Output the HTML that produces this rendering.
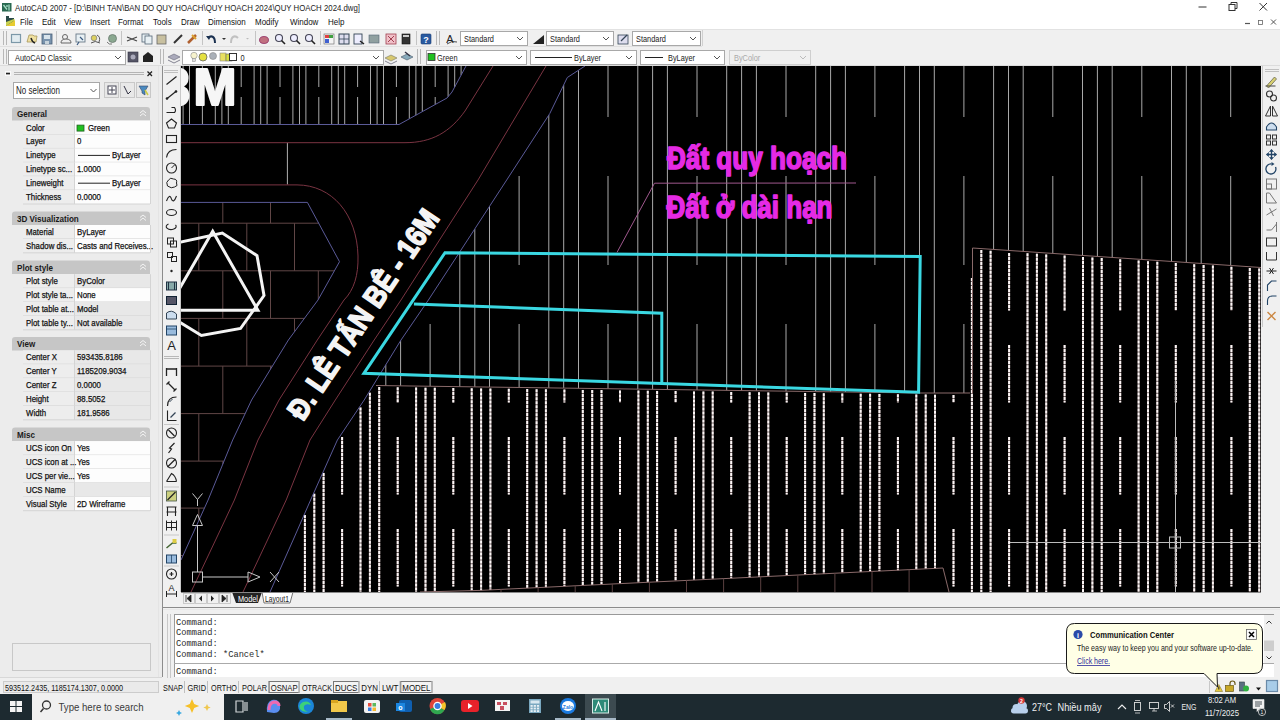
<!DOCTYPE html>
<html><head><meta charset="utf-8"><title>AutoCAD 2007</title>
<style>html,body{margin:0;padding:0;width:1280px;height:720px;overflow:hidden;background:#f0f0f0;}svg{display:block;}</style>
</head><body>
<svg width="1280" height="720" viewBox="0 0 1280 720" font-family="Liberation Sans">
<rect x="0" y="0" width="1280" height="720" fill="#f0f0f0"/>
<rect x="0" y="0" width="1280" height="29" fill="#ffffff"/>
<rect x="2" y="3" width="9.5" height="8.5" fill="#2a6a52"/>
<path d="M3.5,5 L7,9.5 M7,5 v2 M9,4.5 v6" fill="none" stroke="#a8e0c8" stroke-width="1.3"/>
<text x="15" y="10.8" font-family="Liberation Sans" font-size="9.2" fill="#222" textLength="345" lengthAdjust="spacingAndGlyphs">AutoCAD 2007 - [D:\BINH TAN\BAN DO QUY HOACH\QUY HOACH 2024\QUY HOACH 2024.dwg]</text>
<line x1="1198.5" y1="7" x2="1206.5" y2="7" stroke="#333" stroke-width="1"/>
<rect x="1229" y="4.5" width="6" height="6" fill="none" stroke="#333" stroke-width="1"/>
<path d="M1231,4.5 V2.5 H1237 V8.5 H1235" fill="none" stroke="#333" stroke-width="1"/>
<path d="M1259.5,3 L1267,10.5 M1267,3 L1259.5,10.5" fill="none" stroke="#333" stroke-width="1"/>
<path d="M6,16 h3 v2 h5 v4 L6,26z" fill="#2a4a48" stroke="none" stroke-width="1"/>
<path d="M6,26 L15,20 V26z" fill="#e8cc30" stroke="none" stroke-width="1"/>
<path d="M6,22 L14,19 L15,20 L6,26z" fill="#c8d050" stroke="none" stroke-width="1"/>
<text x="20" y="24.5" font-family="Liberation Sans" font-size="9.5" fill="#111" textLength="12.8585625" lengthAdjust="spacingAndGlyphs">File</text>
<text x="42" y="24.5" font-family="Liberation Sans" font-size="9.5" fill="#111" textLength="13.749749999999999" lengthAdjust="spacingAndGlyphs">Edit</text>
<text x="64" y="24.5" font-family="Liberation Sans" font-size="9.5" fill="#111" textLength="17.15175" lengthAdjust="spacingAndGlyphs">View</text>
<text x="90" y="24.5" font-family="Liberation Sans" font-size="9.5" fill="#111" textLength="19.9565625" lengthAdjust="spacingAndGlyphs">Insert</text>
<text x="118" y="24.5" font-family="Liberation Sans" font-size="9.5" fill="#111" textLength="25.272187499999998" lengthAdjust="spacingAndGlyphs">Format</text>
<text x="153" y="24.5" font-family="Liberation Sans" font-size="9.5" fill="#111" textLength="18.6283125" lengthAdjust="spacingAndGlyphs">Tools</text>
<text x="181" y="24.5" font-family="Liberation Sans" font-size="9.5" fill="#111" textLength="18.62175" lengthAdjust="spacingAndGlyphs">Draw</text>
<text x="208" y="24.5" font-family="Liberation Sans" font-size="9.5" fill="#111" textLength="37.697624999999995" lengthAdjust="spacingAndGlyphs">Dimension</text>
<text x="255" y="24.5" font-family="Liberation Sans" font-size="9.5" fill="#111" textLength="23.502937499999998" lengthAdjust="spacingAndGlyphs">Modify</text>
<text x="290" y="24.5" font-family="Liberation Sans" font-size="9.5" fill="#111" textLength="28.3815" lengthAdjust="spacingAndGlyphs">Window</text>
<text x="328" y="24.5" font-family="Liberation Sans" font-size="9.5" fill="#111" textLength="16.4115" lengthAdjust="spacingAndGlyphs">Help</text>
<line x1="1245" y1="23.5" x2="1250" y2="23.5" stroke="#555" stroke-width="1.2"/>
<rect x="1258.5" y="20.5" width="4" height="4" fill="none" stroke="#666" stroke-width="0.8"/>
<path d="M1271,19.5 L1276,24.5 M1276,19.5 L1271,24.5" fill="none" stroke="#555" stroke-width="1"/>
<line x1="0" y1="29.5" x2="1280" y2="29.5" stroke="#e2e2e2" stroke-width="1"/>
<line x1="0" y1="46.5" x2="702" y2="46.5" stroke="#e0e0e0" stroke-width="1"/>
<line x1="0" y1="65.5" x2="1280" y2="65.5" stroke="#dcdcdc" stroke-width="1"/>
<line x1="3.5" y1="31" x2="3.5" y2="45" stroke="#b8b8b8" stroke-width="1"/>
<line x1="6.5" y1="31" x2="6.5" y2="45" stroke="#b8b8b8" stroke-width="1"/>
<line x1="3.5" y1="49" x2="3.5" y2="64" stroke="#b8b8b8" stroke-width="1"/>
<line x1="6.5" y1="49" x2="6.5" y2="64" stroke="#b8b8b8" stroke-width="1"/>
<rect x="11.5" y="34.5" width="9" height="8" fill="#e2ecf0" stroke="#7c98a8" stroke-width="1.2"/>
<path d="M27,42 l2,-7 h4 l1,1 h3 l-1,6z" fill="#efe0a0" stroke="#a8985a" stroke-width="0.8"/>
<path d="M31,38 q1,4 4,5" fill="none" stroke="#222" stroke-width="1.4"/>
<rect x="42" y="34" width="10" height="10" fill="#7a94ae" stroke="#4a6078" stroke-width="0.8"/>
<rect x="44" y="35" width="6" height="4" fill="#d8e4ec"/>
<rect x="45" y="41" width="4" height="3" fill="#c8d4dc"/>
<circle cx="65" cy="37" r="2.5" fill="none" stroke="#666" stroke-width="1"/>
<path d="M61,43 q0,-4 5,-4 q5,0 5,4z" fill="#eee" stroke="#666" stroke-width="1"/>
<rect x="76" y="34" width="9" height="8" fill="#e8f0f4" stroke="#6a7a88" stroke-width="0.9"/>
<path d="M79,42 l-2,3 M80,37 l3,3" fill="none" stroke="#3a5a80" stroke-width="1.2"/>
<circle cx="94" cy="38" r="2.8" fill="#dcd060" stroke="#777" stroke-width="0.7"/>
<path d="M97,35 q4,2 2,7 M91,43 q4,-3 9,0" fill="none" stroke="#555" stroke-width="1"/>
<circle cx="112.5" cy="38.5" r="4" fill="#8aa890" stroke="#6a7a70" stroke-width="0.8"/>
<path d="M107,42 q2,3 5,2" fill="none" stroke="#777" stroke-width="1"/>
<path d="M127,37 L137,41 M127,41 L137,37" fill="none" stroke="#444" stroke-width="1.2"/>
<rect x="142" y="34" width="7" height="8" fill="#e8f0f4" stroke="#567" stroke-width="0.8"/>
<rect x="145" y="36" width="7" height="8" fill="#e8f0f4" stroke="#567" stroke-width="0.8"/>
<rect x="157" y="35" width="9" height="9" fill="#c8c0a0" stroke="#666" stroke-width="0.8"/>
<path d="M174,43 L182,35" fill="none" stroke="#333" stroke-width="2"/>
<path d="M188,43 L196,35" fill="none" stroke="#b06030" stroke-width="2.5"/>
<path d="M192,35 l4,4" fill="none" stroke="#dca030" stroke-width="2"/>
<path d="M215,43 C215,36 211,35 208,38" fill="none" stroke="#1a3050" stroke-width="2"/>
<path d="M206,36 l3,4 l2,-4z" fill="#1a3050" stroke="none" stroke-width="1"/>
<path d="M231,43 C231,36 235,35 238,38" fill="none" stroke="#c0c0c0" stroke-width="2"/>
<ellipse cx="264" cy="40" rx="4.5" ry="3.5" fill="#c07080" stroke="#704" stroke-width="0.6"/>
<circle cx="279" cy="38" r="3.5" fill="#eef" stroke="#445" stroke-width="1.1"/>
<path d="M281.5,40.5 l3.5,3.5" fill="none" stroke="#222" stroke-width="1.6"/>
<circle cx="294" cy="38" r="3.5" fill="#eef" stroke="#445" stroke-width="1.1"/>
<path d="M296.5,40.5 l3.5,3.5" fill="none" stroke="#222" stroke-width="1.6"/>
<circle cx="309" cy="38" r="3.5" fill="#eef" stroke="#445" stroke-width="1.1"/>
<path d="M311.5,40.5 l3.5,3.5" fill="none" stroke="#222" stroke-width="1.6"/>
<rect x="324" y="34" width="10" height="10" fill="#f4f4f4" stroke="#666" stroke-width="0.6"/>
<rect x="325" y="35" width="4" height="3" fill="#e04040"/>
<rect x="329" y="35" width="4" height="3" fill="#40a040"/>
<rect x="325" y="39" width="4" height="4" fill="#4060d0"/>
<rect x="339" y="34" width="10" height="10" fill="#dde" stroke="#345" stroke-width="1"/>
<line x1="344" y1="34" x2="344" y2="44" stroke="#345" stroke-width="0.8"/>
<line x1="339" y1="39" x2="349" y2="39" stroke="#345" stroke-width="0.8"/>
<rect x="354" y="34" width="8" height="10" fill="#eef" stroke="#345" stroke-width="0.9"/>
<path d="M360,41 l4,3" fill="none" stroke="#222" stroke-width="1.5"/>
<rect x="369" y="35" width="10" height="8" fill="#90a0a0" stroke="#567" stroke-width="0.6"/>
<rect x="386" y="34" width="10" height="10" fill="#f0c0c8" stroke="#a04050" stroke-width="0.8"/>
<path d="M388,36 l6,6 M394,36 l-6,6" fill="none" stroke="#a04050" stroke-width="1"/>
<rect x="402" y="34" width="8" height="10" fill="#333" stroke="#111" stroke-width="0.6"/>
<rect x="403" y="35" width="6" height="2" fill="#ccc"/>
<rect x="421" y="34" width="10" height="10" fill="#2a5aa0" stroke="#1a3a70" stroke-width="0.6" rx="1"/>
<text x="426" y="42.5" font-family="Liberation Sans" font-size="9" fill="#fff" font-weight="bold" text-anchor="middle">?</text>
<line x1="56.5" y1="31" x2="56.5" y2="45" stroke="#c4c4c4" stroke-width="1"/>
<line x1="121.5" y1="31" x2="121.5" y2="45" stroke="#c4c4c4" stroke-width="1"/>
<line x1="202.5" y1="31" x2="202.5" y2="45" stroke="#c4c4c4" stroke-width="1"/>
<line x1="255.5" y1="31" x2="255.5" y2="45" stroke="#c4c4c4" stroke-width="1"/>
<line x1="320.5" y1="31" x2="320.5" y2="45" stroke="#c4c4c4" stroke-width="1"/>
<line x1="416.5" y1="31" x2="416.5" y2="45" stroke="#c4c4c4" stroke-width="1"/>
<path d="M222,38 l4,0 l-2,2z" fill="#333" stroke="none" stroke-width="1"/>
<path d="M246,38 l3,0 l-1.5,1.5z" fill="#bbb" stroke="none" stroke-width="1"/>
<line x1="436.5" y1="31" x2="436.5" y2="45" stroke="#b8b8b8" stroke-width="1"/>
<line x1="439.5" y1="31" x2="439.5" y2="45" stroke="#b8b8b8" stroke-width="1"/>
<text x="450" y="43" font-family="Liberation Sans" font-size="11" fill="#222" text-anchor="middle">A</text>
<path d="M447,44 q5,-4 10,-2" fill="none" stroke="#222" stroke-width="0.8"/>
<rect x="460.5" y="31.5" width="67" height="14" fill="#ffffff" stroke="#a8a8a8" stroke-width="1"/>
<text x="464" y="41.5" font-family="Liberation Sans" font-size="9" fill="#222" textLength="29.949218749999996" lengthAdjust="spacingAndGlyphs">Standard</text>
<path d="M517,37.0 l3,3 l3,-3" fill="none" stroke="#555" stroke-width="1"/>
<path d="M533,44 L544,35 L544,44z" fill="#222" stroke="none" stroke-width="1"/>
<rect x="546.5" y="31.5" width="67" height="14" fill="#ffffff" stroke="#a8a8a8" stroke-width="1"/>
<text x="550" y="41.5" font-family="Liberation Sans" font-size="9" fill="#222" textLength="29.949218749999996" lengthAdjust="spacingAndGlyphs">Standard</text>
<path d="M603,37.0 l3,3 l3,-3" fill="none" stroke="#555" stroke-width="1"/>
<rect x="618" y="35" width="10" height="9" fill="#dde" stroke="#345" stroke-width="0.8"/>
<path d="M621,41 l6,-6" fill="none" stroke="#345" stroke-width="1.2"/>
<rect x="632.5" y="31.5" width="68" height="14" fill="#ffffff" stroke="#a8a8a8" stroke-width="1"/>
<text x="636" y="41.5" font-family="Liberation Sans" font-size="9" fill="#222" textLength="29.949218749999996" lengthAdjust="spacingAndGlyphs">Standard</text>
<path d="M690,37.0 l3,3 l3,-3" fill="none" stroke="#555" stroke-width="1"/>
<line x1="702.5" y1="30" x2="702.5" y2="46" stroke="#d0d0d0" stroke-width="1"/>
<rect x="8.5" y="50.5" width="117" height="14" fill="#ffffff" stroke="#a8a8a8" stroke-width="1"/>
<text x="15" y="60.5" font-family="Liberation Sans" font-size="9" fill="#222" textLength="56.59665625" lengthAdjust="spacingAndGlyphs">AutoCAD Classic</text>
<path d="M115,56.0 l3,3 l3,-3" fill="none" stroke="#555" stroke-width="1"/>
<rect x="128" y="52" width="10" height="10" fill="#556" stroke="#334" stroke-width="0.6"/>
<circle cx="133" cy="57" r="2.5" fill="#aab"/>
<path d="M143,62 V56 L148,52 L153,56 V62z" fill="#222" stroke="none" stroke-width="1"/>
<line x1="160.5" y1="49" x2="160.5" y2="64" stroke="#b8b8b8" stroke-width="1"/>
<line x1="163.5" y1="49" x2="163.5" y2="64" stroke="#b8b8b8" stroke-width="1"/>
<path d="M168,57 l6,-3 l6,3 l-6,3z" fill="#aab" stroke="#667" stroke-width="0.6"/>
<path d="M168,60 l6,3 l6,-3" fill="none" stroke="#667" stroke-width="0.8"/>
<rect x="182.5" y="50.5" width="201" height="14" fill="#ffffff" stroke="#a8a8a8" stroke-width="1"/>
<text x="240.5" y="60.5" font-family="Liberation Sans" font-size="9" fill="#222" textLength="4.10384375" lengthAdjust="spacingAndGlyphs">0</text>
<path d="M373,56.0 l3,3 l3,-3" fill="none" stroke="#555" stroke-width="1"/>
<circle cx="194" cy="55.5" r="3.2" fill="#f6f2cc" stroke="#999" stroke-width="0.7"/>
<rect x="192.5" y="58.5" width="3" height="3" fill="#ddd" stroke="#888" stroke-width="0.5"/>
<circle cx="203" cy="57" r="4" fill="#e4e040" stroke="#666" stroke-width="0.8"/>
<circle cx="213" cy="56" r="3.5" fill="#aab0b8" stroke="#888" stroke-width="0.6"/>
<rect x="220" y="53" width="6" height="8" fill="#e8e060" stroke="#888" stroke-width="0.6"/>
<rect x="226" y="54" width="6" height="7" fill="#d8e040" stroke="#666" stroke-width="0.6"/>
<rect x="229.5" y="53.5" width="7" height="7" fill="#fff" stroke="#333" stroke-width="1"/>
<path d="M385,58 l6,-3 l6,3 l-6,3z" fill="#d8c870" stroke="#776" stroke-width="0.6"/>
<path d="M385,61 l6,3 l6,-3" fill="none" stroke="#667" stroke-width="0.8"/>
<path d="M401,57 l6,-3 l6,3 l-6,3z" fill="#8ab" stroke="#456" stroke-width="0.6"/>
<path d="M405,52 l5,4" fill="none" stroke="#334" stroke-width="1.5"/>
<line x1="417.5" y1="49" x2="417.5" y2="64" stroke="#b8b8b8" stroke-width="1"/>
<line x1="420.5" y1="49" x2="420.5" y2="64" stroke="#b8b8b8" stroke-width="1"/>
<rect x="426.5" y="50.5" width="100" height="14" fill="#ffffff" stroke="#a8a8a8" stroke-width="1"/>
<rect x="428" y="53.5" width="7" height="7" fill="#20c020" stroke="#333" stroke-width="0.8"/>
<text x="437" y="60.5" font-family="Liberation Sans" font-size="9" fill="#222" textLength="20.50896875" lengthAdjust="spacingAndGlyphs">Green</text>
<path d="M516,56.0 l3,3 l3,-3" fill="none" stroke="#555" stroke-width="1"/>
<rect x="530.5" y="50.5" width="106" height="14" fill="#ffffff" stroke="#a8a8a8" stroke-width="1"/>
<line x1="535" y1="57.5" x2="572" y2="57.5" stroke="#222" stroke-width="1"/>
<text x="574" y="60.5" font-family="Liberation Sans" font-size="9" fill="#222" textLength="27.07153125" lengthAdjust="spacingAndGlyphs">ByLayer</text>
<path d="M626,56.0 l3,3 l3,-3" fill="none" stroke="#555" stroke-width="1"/>
<rect x="640.5" y="50.5" width="84" height="14" fill="#ffffff" stroke="#a8a8a8" stroke-width="1"/>
<line x1="645" y1="57.5" x2="663" y2="57.5" stroke="#222" stroke-width="1"/>
<text x="668" y="60.5" font-family="Liberation Sans" font-size="9" fill="#222" textLength="27.07153125" lengthAdjust="spacingAndGlyphs">ByLayer</text>
<path d="M714,56.0 l3,3 l3,-3" fill="none" stroke="#555" stroke-width="1"/>
<rect x="729.5" y="50.5" width="81" height="14" fill="#f0f0f0" stroke="#cfcfcf" stroke-width="1"/>
<text x="734" y="60.5" font-family="Liberation Sans" font-size="9" fill="#aaa" textLength="26.247687499999998" lengthAdjust="spacingAndGlyphs">ByColor</text>
<path d="M800,56.0 l3,3 l3,-3" fill="none" stroke="#bbb" stroke-width="1"/>
<rect x="0" y="66" width="162" height="611" fill="#ececec"/>
<line x1="158.5" y1="66" x2="158.5" y2="677" stroke="#e4e4e4" stroke-width="1"/>
<rect x="5" y="71" width="6" height="5" fill="#fafafa"/>
<rect x="6" y="72.7" width="4" height="1.7" fill="#222"/>
<line x1="14" y1="72.5" x2="144" y2="72.5" stroke="#b4b4b4" stroke-width="1"/>
<line x1="14" y1="74.5" x2="144" y2="74.5" stroke="#b4b4b4" stroke-width="1"/>
<path d="M147.5,71.5 l4.5,4.5 M152,71.5 l-4.5,4.5" fill="none" stroke="#222" stroke-width="1.3"/>
<rect x="13.5" y="82.5" width="86" height="16" fill="#fff" stroke="#a8a8a8" stroke-width="1"/>
<text x="16" y="93.5" font-family="Liberation Sans" font-size="10" fill="#222" textLength="44" lengthAdjust="spacingAndGlyphs">No selection</text>
<path d="M90.5,89 l3,3 l3,-3" fill="none" stroke="#555" stroke-width="1"/>
<rect x="104.5" y="82.5" width="14" height="15" fill="#e8e8e8" stroke="#c8c8c8" stroke-width="1"/>
<rect x="120.5" y="82.5" width="14" height="15" fill="#e8e8e8" stroke="#c8c8c8" stroke-width="1"/>
<rect x="136.5" y="82.5" width="14" height="15" fill="#e8e8e8" stroke="#c8c8c8" stroke-width="1"/>
<rect x="108" y="86" width="8" height="8" fill="#fff" stroke="#445" stroke-width="1"/>
<path d="M112,87 v6 M109,90 h6" fill="none" stroke="#445" stroke-width="1"/>
<path d="M124,86 l4,8 l3,-3" fill="none" stroke="#334" stroke-width="1"/>
<path d="M139,86 h9 l-3,5 v4 l-3,-2 v-2z" fill="#4a8ac0" stroke="#346" stroke-width="0.6"/>
<path d="M145,90 l3,5" fill="none" stroke="#cc4" stroke-width="1.5"/>
<path d="M12,120.5 V110 Q12,107 15,107 H147 Q150,107 150,110 V120.5Z" fill="#c6c6c6" stroke="none" stroke-width="1"/>
<text x="17" y="117" font-family="Liberation Sans" font-size="9.5" fill="#1a1a1a" font-weight="bold" textLength="30.070078125" lengthAdjust="spacingAndGlyphs">General</text>
<path d="M140,113 l3,-2.5 l3,2.5 M140,116 l3,-2.5 l3,2.5" fill="none" stroke="#f4f4f4" stroke-width="1"/>
<rect x="23" y="120.6" width="51.5" height="13.9" fill="#ededed"/>
<rect x="74.5" y="120.6" width="75.5" height="13.9" fill="#fdfdfd"/>
<line x1="23" y1="134.5" x2="150" y2="134.5" stroke="#d4d4d4" stroke-width="1"/>
<line x1="74.5" y1="120.6" x2="74.5" y2="134.5" stroke="#d4d4d4" stroke-width="1"/>
<text x="26" y="130.5" font-family="Liberation Sans" font-size="9" fill="#111" stroke="#111" stroke-width="0.25" textLength="18.7104375" lengthAdjust="spacingAndGlyphs">Color</text>
<rect x="77" y="125.1" width="7" height="6" fill="#20c020" stroke="#206020" stroke-width="0.8"/>
<text x="88" y="130.5" font-family="Liberation Sans" font-size="9" fill="#111" stroke="#111" stroke-width="0.25" textLength="21.759515625" lengthAdjust="spacingAndGlyphs">Green</text>
<rect x="23" y="134.5" width="51.5" height="13.9" fill="#ededed"/>
<rect x="74.5" y="134.5" width="75.5" height="13.9" fill="#fdfdfd"/>
<line x1="23" y1="148.4" x2="150" y2="148.4" stroke="#d4d4d4" stroke-width="1"/>
<line x1="74.5" y1="134.5" x2="74.5" y2="148.4" stroke="#d4d4d4" stroke-width="1"/>
<text x="26" y="144.4" font-family="Liberation Sans" font-size="9" fill="#111" stroke="#111" stroke-width="0.25" textLength="19.584515625" lengthAdjust="spacingAndGlyphs">Layer</text>
<text x="77" y="144.4" font-family="Liberation Sans" font-size="9" fill="#111" stroke="#111" stroke-width="0.25" textLength="4.354078125" lengthAdjust="spacingAndGlyphs">0</text>
<rect x="23" y="148.4" width="51.5" height="13.9" fill="#ededed"/>
<rect x="74.5" y="148.4" width="75.5" height="13.9" fill="#fdfdfd"/>
<line x1="23" y1="162.3" x2="150" y2="162.3" stroke="#d4d4d4" stroke-width="1"/>
<line x1="74.5" y1="148.4" x2="74.5" y2="162.3" stroke="#d4d4d4" stroke-width="1"/>
<text x="26" y="158.3" font-family="Liberation Sans" font-size="9" fill="#111" stroke="#111" stroke-width="0.25" textLength="29.600390625" lengthAdjust="spacingAndGlyphs">Linetype</text>
<line x1="78" y1="155.4" x2="110" y2="155.4" stroke="#222" stroke-width="1"/>
<text x="112" y="158.3" font-family="Liberation Sans" font-size="9" fill="#111" stroke="#111" stroke-width="0.25" textLength="28.722234375" lengthAdjust="spacingAndGlyphs">ByLayer</text>
<rect x="23" y="162.3" width="51.5" height="13.9" fill="#ededed"/>
<rect x="74.5" y="162.3" width="75.5" height="13.9" fill="#fdfdfd"/>
<line x1="23" y1="176.20000000000002" x2="150" y2="176.20000000000002" stroke="#d4d4d4" stroke-width="1"/>
<line x1="74.5" y1="162.3" x2="74.5" y2="176.20000000000002" stroke="#d4d4d4" stroke-width="1"/>
<text x="26" y="172.20000000000002" font-family="Liberation Sans" font-size="9" fill="#111" stroke="#111" stroke-width="0.25" textLength="46.130390625" lengthAdjust="spacingAndGlyphs">Linetype sc...</text>
<text x="77" y="172.20000000000002" font-family="Liberation Sans" font-size="9" fill="#111" stroke="#111" stroke-width="0.25" textLength="23.945390624999998" lengthAdjust="spacingAndGlyphs">1.0000</text>
<rect x="23" y="176.20000000000002" width="51.5" height="13.9" fill="#ededed"/>
<rect x="74.5" y="176.20000000000002" width="75.5" height="13.9" fill="#fdfdfd"/>
<line x1="23" y1="190.10000000000002" x2="150" y2="190.10000000000002" stroke="#d4d4d4" stroke-width="1"/>
<line x1="74.5" y1="176.20000000000002" x2="74.5" y2="190.10000000000002" stroke="#d4d4d4" stroke-width="1"/>
<text x="26" y="186.10000000000002" font-family="Liberation Sans" font-size="9" fill="#111" stroke="#111" stroke-width="0.25" textLength="37.43446875" lengthAdjust="spacingAndGlyphs">Lineweight</text>
<line x1="78" y1="183.20000000000002" x2="110" y2="183.20000000000002" stroke="#222" stroke-width="1"/>
<text x="112" y="186.10000000000002" font-family="Liberation Sans" font-size="9" fill="#111" stroke="#111" stroke-width="0.25" textLength="28.722234375" lengthAdjust="spacingAndGlyphs">ByLayer</text>
<rect x="23" y="190.10000000000002" width="51.5" height="13.9" fill="#ededed"/>
<rect x="74.5" y="190.10000000000002" width="75.5" height="13.9" fill="#fdfdfd"/>
<line x1="23" y1="204.00000000000003" x2="150" y2="204.00000000000003" stroke="#d4d4d4" stroke-width="1"/>
<line x1="74.5" y1="190.10000000000002" x2="74.5" y2="204.00000000000003" stroke="#d4d4d4" stroke-width="1"/>
<text x="26" y="200.00000000000003" font-family="Liberation Sans" font-size="9" fill="#111" stroke="#111" stroke-width="0.25" textLength="35.244515625" lengthAdjust="spacingAndGlyphs">Thickness</text>
<text x="77" y="200.00000000000003" font-family="Liberation Sans" font-size="9" fill="#111" stroke="#111" stroke-width="0.25" textLength="23.945390624999998" lengthAdjust="spacingAndGlyphs">0.0000</text>
<line x1="150.5" y1="120.6" x2="150.5" y2="204.00000000000003" stroke="#d4d4d4" stroke-width="1"/>
<path d="M12,225.0 V214.5 Q12,211.5 15,211.5 H147 Q150,211.5 150,214.5 V225.0Z" fill="#c6c6c6" stroke="none" stroke-width="1"/>
<text x="17" y="221.5" font-family="Liberation Sans" font-size="9.5" fill="#1a1a1a" font-weight="bold" textLength="61.77374999999999" lengthAdjust="spacingAndGlyphs">3D Visualization</text>
<path d="M140,217.5 l3,-2.5 l3,2.5 M140,220.5 l3,-2.5 l3,2.5" fill="none" stroke="#f4f4f4" stroke-width="1"/>
<rect x="23" y="225" width="51.5" height="13.9" fill="#ededed"/>
<rect x="74.5" y="225" width="75.5" height="13.9" fill="#fdfdfd"/>
<line x1="23" y1="238.9" x2="150" y2="238.9" stroke="#d4d4d4" stroke-width="1"/>
<line x1="74.5" y1="225" x2="74.5" y2="238.9" stroke="#d4d4d4" stroke-width="1"/>
<text x="26" y="234.9" font-family="Liberation Sans" font-size="9" fill="#111" stroke="#111" stroke-width="0.25" textLength="27.846796875" lengthAdjust="spacingAndGlyphs">Material</text>
<text x="77" y="234.9" font-family="Liberation Sans" font-size="9" fill="#111" stroke="#111" stroke-width="0.25" textLength="28.722234375" lengthAdjust="spacingAndGlyphs">ByLayer</text>
<rect x="23" y="238.9" width="51.5" height="13.9" fill="#ededed"/>
<rect x="74.5" y="238.9" width="75.5" height="13.9" fill="#fdfdfd"/>
<line x1="23" y1="252.8" x2="150" y2="252.8" stroke="#d4d4d4" stroke-width="1"/>
<line x1="74.5" y1="238.9" x2="74.5" y2="252.8" stroke="#d4d4d4" stroke-width="1"/>
<text x="26" y="248.8" font-family="Liberation Sans" font-size="9" fill="#111" stroke="#111" stroke-width="0.25" textLength="47.003109374999994" lengthAdjust="spacingAndGlyphs">Shadow dis...</text>
<text x="77" y="248.8" font-family="Liberation Sans" font-size="9" fill="#111" stroke="#111" stroke-width="0.25" textLength="76.153546875" lengthAdjust="spacingAndGlyphs">Casts and Receives...</text>
<line x1="150.5" y1="225" x2="150.5" y2="252.8" stroke="#d4d4d4" stroke-width="1"/>
<path d="M12,274.0 V263.5 Q12,260.5 15,260.5 H147 Q150,260.5 150,263.5 V274.0Z" fill="#c6c6c6" stroke="none" stroke-width="1"/>
<text x="17" y="270.5" font-family="Liberation Sans" font-size="9.5" fill="#1a1a1a" font-weight="bold" textLength="35.897890625" lengthAdjust="spacingAndGlyphs">Plot style</text>
<path d="M140,266.5 l3,-2.5 l3,2.5 M140,269.5 l3,-2.5 l3,2.5" fill="none" stroke="#f4f4f4" stroke-width="1"/>
<rect x="23" y="274.2" width="51.5" height="13.9" fill="#ededed"/>
<rect x="74.5" y="274.2" width="75.5" height="13.9" fill="#e8e8e8"/>
<line x1="23" y1="288.09999999999997" x2="150" y2="288.09999999999997" stroke="#d4d4d4" stroke-width="1"/>
<line x1="74.5" y1="274.2" x2="74.5" y2="288.09999999999997" stroke="#d4d4d4" stroke-width="1"/>
<text x="26" y="284.09999999999997" font-family="Liberation Sans" font-size="9" fill="#111" stroke="#111" stroke-width="0.25" textLength="31.765875" lengthAdjust="spacingAndGlyphs">Plot style</text>
<text x="77" y="284.09999999999997" font-family="Liberation Sans" font-size="9" fill="#111" stroke="#111" stroke-width="0.25" textLength="27.84815625" lengthAdjust="spacingAndGlyphs">ByColor</text>
<rect x="23" y="288.09999999999997" width="51.5" height="13.9" fill="#ededed"/>
<rect x="74.5" y="288.09999999999997" width="75.5" height="13.9" fill="#fdfdfd"/>
<line x1="23" y1="301.99999999999994" x2="150" y2="301.99999999999994" stroke="#d4d4d4" stroke-width="1"/>
<line x1="74.5" y1="288.09999999999997" x2="74.5" y2="301.99999999999994" stroke="#d4d4d4" stroke-width="1"/>
<text x="26" y="297.99999999999994" font-family="Liberation Sans" font-size="9" fill="#111" stroke="#111" stroke-width="0.25" textLength="46.994953124999995" lengthAdjust="spacingAndGlyphs">Plot style ta...</text>
<text x="77" y="297.99999999999994" font-family="Liberation Sans" font-size="9" fill="#111" stroke="#111" stroke-width="0.25" textLength="18.717234375" lengthAdjust="spacingAndGlyphs">None</text>
<rect x="23" y="301.99999999999994" width="51.5" height="13.9" fill="#ededed"/>
<rect x="74.5" y="301.99999999999994" width="75.5" height="13.9" fill="#e8e8e8"/>
<line x1="23" y1="315.8999999999999" x2="150" y2="315.8999999999999" stroke="#d4d4d4" stroke-width="1"/>
<line x1="74.5" y1="301.99999999999994" x2="74.5" y2="315.8999999999999" stroke="#d4d4d4" stroke-width="1"/>
<text x="26" y="311.8999999999999" font-family="Liberation Sans" font-size="9" fill="#111" stroke="#111" stroke-width="0.25" textLength="47.873109375" lengthAdjust="spacingAndGlyphs">Plot table at...</text>
<text x="77" y="311.8999999999999" font-family="Liberation Sans" font-size="9" fill="#111" stroke="#111" stroke-width="0.25" textLength="21.324515625" lengthAdjust="spacingAndGlyphs">Model</text>
<rect x="23" y="315.8999999999999" width="51.5" height="13.9" fill="#ededed"/>
<rect x="74.5" y="315.8999999999999" width="75.5" height="13.9" fill="#e8e8e8"/>
<line x1="23" y1="329.7999999999999" x2="150" y2="329.7999999999999" stroke="#d4d4d4" stroke-width="1"/>
<line x1="74.5" y1="315.8999999999999" x2="74.5" y2="329.7999999999999" stroke="#d4d4d4" stroke-width="1"/>
<text x="26" y="325.7999999999999" font-family="Liberation Sans" font-size="9" fill="#111" stroke="#111" stroke-width="0.25" textLength="46.853578125" lengthAdjust="spacingAndGlyphs">Plot table ty...</text>
<text x="77" y="325.7999999999999" font-family="Liberation Sans" font-size="9" fill="#111" stroke="#111" stroke-width="0.25" textLength="45.26446875" lengthAdjust="spacingAndGlyphs">Not available</text>
<line x1="150.5" y1="274.2" x2="150.5" y2="329.7999999999999" stroke="#d4d4d4" stroke-width="1"/>
<path d="M12,350.5 V340 Q12,337 15,337 H147 Q150,337 150,340 V350.5Z" fill="#c6c6c6" stroke="none" stroke-width="1"/>
<text x="17" y="347" font-family="Liberation Sans" font-size="9.5" fill="#1a1a1a" font-weight="bold" textLength="18.25375" lengthAdjust="spacingAndGlyphs">View</text>
<path d="M140,343 l3,-2.5 l3,2.5 M140,346 l3,-2.5 l3,2.5" fill="none" stroke="#f4f4f4" stroke-width="1"/>
<rect x="23" y="350.3" width="51.5" height="13.9" fill="#ededed"/>
<rect x="74.5" y="350.3" width="75.5" height="13.9" fill="#e8e8e8"/>
<line x1="23" y1="364.2" x2="150" y2="364.2" stroke="#d4d4d4" stroke-width="1"/>
<line x1="74.5" y1="350.3" x2="74.5" y2="364.2" stroke="#d4d4d4" stroke-width="1"/>
<text x="26" y="360.2" font-family="Liberation Sans" font-size="9" fill="#111" stroke="#111" stroke-width="0.25" textLength="30.897234375" lengthAdjust="spacingAndGlyphs">Center X</text>
<text x="77" y="360.2" font-family="Liberation Sans" font-size="9" fill="#111" stroke="#111" stroke-width="0.25" textLength="45.71578125" lengthAdjust="spacingAndGlyphs">593435.8186</text>
<rect x="23" y="364.2" width="51.5" height="13.9" fill="#ededed"/>
<rect x="74.5" y="364.2" width="75.5" height="13.9" fill="#e8e8e8"/>
<line x1="23" y1="378.09999999999997" x2="150" y2="378.09999999999997" stroke="#d4d4d4" stroke-width="1"/>
<line x1="74.5" y1="364.2" x2="74.5" y2="378.09999999999997" stroke="#d4d4d4" stroke-width="1"/>
<text x="26" y="374.09999999999997" font-family="Liberation Sans" font-size="9" fill="#111" stroke="#111" stroke-width="0.25" textLength="30.755859375" lengthAdjust="spacingAndGlyphs">Center Y</text>
<text x="77" y="374.09999999999997" font-family="Liberation Sans" font-size="9" fill="#111" stroke="#111" stroke-width="0.25" textLength="49.48940625" lengthAdjust="spacingAndGlyphs">1185209.9034</text>
<rect x="23" y="378.09999999999997" width="51.5" height="13.9" fill="#ededed"/>
<rect x="74.5" y="378.09999999999997" width="75.5" height="13.9" fill="#e8e8e8"/>
<line x1="23" y1="391.99999999999994" x2="150" y2="391.99999999999994" stroke="#d4d4d4" stroke-width="1"/>
<line x1="74.5" y1="378.09999999999997" x2="74.5" y2="391.99999999999994" stroke="#d4d4d4" stroke-width="1"/>
<text x="26" y="387.99999999999994" font-family="Liberation Sans" font-size="9" fill="#111" stroke="#111" stroke-width="0.25" textLength="30.456796875" lengthAdjust="spacingAndGlyphs">Center Z</text>
<text x="77" y="387.99999999999994" font-family="Liberation Sans" font-size="9" fill="#111" stroke="#111" stroke-width="0.25" textLength="23.945390624999998" lengthAdjust="spacingAndGlyphs">0.0000</text>
<rect x="23" y="391.99999999999994" width="51.5" height="13.9" fill="#ededed"/>
<rect x="74.5" y="391.99999999999994" width="75.5" height="13.9" fill="#e8e8e8"/>
<line x1="23" y1="405.8999999999999" x2="150" y2="405.8999999999999" stroke="#d4d4d4" stroke-width="1"/>
<line x1="74.5" y1="391.99999999999994" x2="74.5" y2="405.8999999999999" stroke="#d4d4d4" stroke-width="1"/>
<text x="26" y="401.8999999999999" font-family="Liberation Sans" font-size="9" fill="#111" stroke="#111" stroke-width="0.25" textLength="22.632234375" lengthAdjust="spacingAndGlyphs">Height</text>
<text x="77" y="401.8999999999999" font-family="Liberation Sans" font-size="9" fill="#111" stroke="#111" stroke-width="0.25" textLength="28.299468750000003" lengthAdjust="spacingAndGlyphs">88.5052</text>
<rect x="23" y="405.8999999999999" width="51.5" height="13.9" fill="#ededed"/>
<rect x="74.5" y="405.8999999999999" width="75.5" height="13.9" fill="#e8e8e8"/>
<line x1="23" y1="419.7999999999999" x2="150" y2="419.7999999999999" stroke="#d4d4d4" stroke-width="1"/>
<line x1="74.5" y1="405.8999999999999" x2="74.5" y2="419.7999999999999" stroke="#d4d4d4" stroke-width="1"/>
<text x="26" y="415.7999999999999" font-family="Liberation Sans" font-size="9" fill="#111" stroke="#111" stroke-width="0.25" textLength="20.014078125" lengthAdjust="spacingAndGlyphs">Width</text>
<text x="77" y="415.7999999999999" font-family="Liberation Sans" font-size="9" fill="#111" stroke="#111" stroke-width="0.25" textLength="32.653546874999996" lengthAdjust="spacingAndGlyphs">181.9586</text>
<line x1="150.5" y1="350.3" x2="150.5" y2="419.7999999999999" stroke="#d4d4d4" stroke-width="1"/>
<path d="M12,441.0 V430.5 Q12,427.5 15,427.5 H147 Q150,427.5 150,430.5 V441.0Z" fill="#c6c6c6" stroke="none" stroke-width="1"/>
<text x="17" y="437.5" font-family="Liberation Sans" font-size="9.5" fill="#1a1a1a" font-weight="bold" textLength="17.9509375" lengthAdjust="spacingAndGlyphs">Misc</text>
<path d="M140,433.5 l3,-2.5 l3,2.5 M140,436.5 l3,-2.5 l3,2.5" fill="none" stroke="#f4f4f4" stroke-width="1"/>
<rect x="23" y="441.2" width="51.5" height="13.9" fill="#ededed"/>
<rect x="74.5" y="441.2" width="75.5" height="13.9" fill="#fdfdfd"/>
<line x1="23" y1="455.09999999999997" x2="150" y2="455.09999999999997" stroke="#d4d4d4" stroke-width="1"/>
<line x1="74.5" y1="441.2" x2="74.5" y2="455.09999999999997" stroke="#d4d4d4" stroke-width="1"/>
<text x="26" y="451.09999999999997" font-family="Liberation Sans" font-size="9" fill="#111" stroke="#111" stroke-width="0.25" textLength="45.689953124999995" lengthAdjust="spacingAndGlyphs">UCS icon On</text>
<text x="77" y="451.09999999999997" font-family="Liberation Sans" font-size="9" fill="#111" stroke="#111" stroke-width="0.25" textLength="12.7726875" lengthAdjust="spacingAndGlyphs">Yes</text>
<rect x="23" y="455.09999999999997" width="51.5" height="13.9" fill="#ededed"/>
<rect x="74.5" y="455.09999999999997" width="75.5" height="13.9" fill="#fdfdfd"/>
<line x1="23" y1="468.99999999999994" x2="150" y2="468.99999999999994" stroke="#d4d4d4" stroke-width="1"/>
<line x1="74.5" y1="455.09999999999997" x2="74.5" y2="468.99999999999994" stroke="#d4d4d4" stroke-width="1"/>
<text x="26" y="464.99999999999994" font-family="Liberation Sans" font-size="9" fill="#111" stroke="#111" stroke-width="0.25" textLength="50.474953125" lengthAdjust="spacingAndGlyphs">UCS icon at ...</text>
<text x="77" y="464.99999999999994" font-family="Liberation Sans" font-size="9" fill="#111" stroke="#111" stroke-width="0.25" textLength="12.7726875" lengthAdjust="spacingAndGlyphs">Yes</text>
<rect x="23" y="468.99999999999994" width="51.5" height="13.9" fill="#ededed"/>
<rect x="74.5" y="468.99999999999994" width="75.5" height="13.9" fill="#fdfdfd"/>
<line x1="23" y1="482.8999999999999" x2="150" y2="482.8999999999999" stroke="#d4d4d4" stroke-width="1"/>
<line x1="74.5" y1="468.99999999999994" x2="74.5" y2="482.8999999999999" stroke="#d4d4d4" stroke-width="1"/>
<text x="26" y="478.8999999999999" font-family="Liberation Sans" font-size="9" fill="#111" stroke="#111" stroke-width="0.25" textLength="48.732234375000004" lengthAdjust="spacingAndGlyphs">UCS per vie...</text>
<text x="77" y="478.8999999999999" font-family="Liberation Sans" font-size="9" fill="#111" stroke="#111" stroke-width="0.25" textLength="12.7726875" lengthAdjust="spacingAndGlyphs">Yes</text>
<rect x="23" y="482.8999999999999" width="51.5" height="13.9" fill="#ededed"/>
<rect x="74.5" y="482.8999999999999" width="75.5" height="13.9" fill="#e8e8e8"/>
<line x1="23" y1="496.7999999999999" x2="150" y2="496.7999999999999" stroke="#d4d4d4" stroke-width="1"/>
<line x1="74.5" y1="482.8999999999999" x2="74.5" y2="496.7999999999999" stroke="#d4d4d4" stroke-width="1"/>
<text x="26" y="492.7999999999999" font-family="Liberation Sans" font-size="9" fill="#111" stroke="#111" stroke-width="0.25" textLength="39.59315625" lengthAdjust="spacingAndGlyphs">UCS Name</text>
<rect x="23" y="496.7999999999999" width="51.5" height="13.9" fill="#ededed"/>
<rect x="74.5" y="496.7999999999999" width="75.5" height="13.9" fill="#fdfdfd"/>
<line x1="23" y1="510.6999999999999" x2="150" y2="510.6999999999999" stroke="#d4d4d4" stroke-width="1"/>
<line x1="74.5" y1="496.7999999999999" x2="74.5" y2="510.6999999999999" stroke="#d4d4d4" stroke-width="1"/>
<text x="26" y="506.6999999999999" font-family="Liberation Sans" font-size="9" fill="#111" stroke="#111" stroke-width="0.25" textLength="40.766296875" lengthAdjust="spacingAndGlyphs">Visual Style</text>
<text x="77" y="506.6999999999999" font-family="Liberation Sans" font-size="9" fill="#111" stroke="#111" stroke-width="0.25" textLength="48.289078125" lengthAdjust="spacingAndGlyphs">2D Wireframe</text>
<line x1="150.5" y1="441.2" x2="150.5" y2="510.6999999999999" stroke="#d4d4d4" stroke-width="1"/>
<rect x="12.5" y="643.5" width="138" height="27" fill="#ececec" stroke="#c8c8c8" stroke-width="1"/>
<rect x="162" y="66" width="19" height="540" fill="#f0f0f0"/>
<line x1="162.5" y1="67" x2="162.5" y2="605" stroke="#a0a0a0" stroke-width="1"/>
<line x1="164" y1="70.5" x2="178" y2="70.5" stroke="#c0c0c0" stroke-width="1"/>
<line x1="164" y1="72.5" x2="178" y2="72.5" stroke="#c0c0c0" stroke-width="1"/>
<svg x="181" y="66" width="1080" height="526" viewBox="181 66 1080 526" overflow="hidden">
<rect x="181" y="66" width="1080" height="526" fill="#000000"/>
<line x1="183.1" y1="66.0" x2="183.1" y2="124.5" stroke="#a9a9a9" stroke-width="1"/>
<line x1="189.5" y1="66.0" x2="189.5" y2="124.5" stroke="#a9a9a9" stroke-width="1"/>
<line x1="202.4" y1="66.0" x2="202.4" y2="87.0" stroke="#a9a9a9" stroke-width="1"/>
<line x1="202.4" y1="97.0" x2="202.4" y2="124.5" stroke="#a9a9a9" stroke-width="1"/>
<line x1="215.3" y1="66.0" x2="215.3" y2="124.5" stroke="#a9a9a9" stroke-width="1"/>
<line x1="221.9" y1="66.0" x2="221.9" y2="124.5" stroke="#a9a9a9" stroke-width="1"/>
<line x1="228.3" y1="66.0" x2="228.3" y2="124.5" stroke="#a9a9a9" stroke-width="1"/>
<line x1="241.2" y1="66.0" x2="241.2" y2="87.0" stroke="#a9a9a9" stroke-width="1"/>
<line x1="241.2" y1="97.0" x2="241.2" y2="124.5" stroke="#a9a9a9" stroke-width="1"/>
<line x1="254.1" y1="66.0" x2="254.1" y2="124.5" stroke="#a9a9a9" stroke-width="1"/>
<line x1="260.7" y1="66.0" x2="260.7" y2="124.5" stroke="#a9a9a9" stroke-width="1"/>
<line x1="267.1" y1="66.0" x2="267.1" y2="124.5" stroke="#a9a9a9" stroke-width="1"/>
<line x1="280.0" y1="66.0" x2="280.0" y2="87.0" stroke="#a9a9a9" stroke-width="1"/>
<line x1="280.0" y1="97.0" x2="280.0" y2="124.5" stroke="#a9a9a9" stroke-width="1"/>
<line x1="292.9" y1="66.0" x2="292.9" y2="124.5" stroke="#a9a9a9" stroke-width="1"/>
<line x1="299.5" y1="66.0" x2="299.5" y2="124.5" stroke="#a9a9a9" stroke-width="1"/>
<line x1="305.9" y1="66.0" x2="305.9" y2="124.5" stroke="#a9a9a9" stroke-width="1"/>
<line x1="318.8" y1="66.0" x2="318.8" y2="87.0" stroke="#a9a9a9" stroke-width="1"/>
<line x1="318.8" y1="97.0" x2="318.8" y2="124.5" stroke="#a9a9a9" stroke-width="1"/>
<line x1="331.7" y1="66.0" x2="331.7" y2="124.5" stroke="#a9a9a9" stroke-width="1"/>
<line x1="338.3" y1="66.0" x2="338.3" y2="124.5" stroke="#a9a9a9" stroke-width="1"/>
<line x1="344.7" y1="66.0" x2="344.7" y2="124.5" stroke="#a9a9a9" stroke-width="1"/>
<line x1="357.6" y1="66.0" x2="357.6" y2="87.0" stroke="#a9a9a9" stroke-width="1"/>
<line x1="357.6" y1="97.0" x2="357.6" y2="124.5" stroke="#a9a9a9" stroke-width="1"/>
<line x1="370.5" y1="66.0" x2="370.5" y2="124.5" stroke="#a9a9a9" stroke-width="1"/>
<line x1="377.1" y1="66.0" x2="377.1" y2="124.5" stroke="#a9a9a9" stroke-width="1"/>
<line x1="383.5" y1="66.0" x2="383.5" y2="124.5" stroke="#a9a9a9" stroke-width="1"/>
<line x1="396.4" y1="66.0" x2="396.4" y2="87.0" stroke="#a9a9a9" stroke-width="1"/>
<line x1="396.4" y1="97.0" x2="396.4" y2="124.5" stroke="#a9a9a9" stroke-width="1"/>
<line x1="409.3" y1="66.0" x2="409.3" y2="118.8" stroke="#a9a9a9" stroke-width="1"/>
<line x1="415.9" y1="66.0" x2="415.9" y2="115.2" stroke="#a9a9a9" stroke-width="1"/>
<line x1="422.3" y1="66.0" x2="422.3" y2="111.6" stroke="#a9a9a9" stroke-width="1"/>
<line x1="435.2" y1="66.0" x2="435.2" y2="87.0" stroke="#a9a9a9" stroke-width="1"/>
<line x1="435.2" y1="97.0" x2="435.2" y2="104.5" stroke="#a9a9a9" stroke-width="1"/>
<line x1="448.1" y1="66.0" x2="448.1" y2="96.7" stroke="#a9a9a9" stroke-width="1"/>
<line x1="454.7" y1="66.0" x2="454.7" y2="87.0" stroke="#a9a9a9" stroke-width="1"/>
<line x1="461.1" y1="66.0" x2="461.1" y2="75.1" stroke="#a9a9a9" stroke-width="1"/>
<line x1="287.4" y1="142.7" x2="287.4" y2="184.5" stroke="#b0b0b0" stroke-width="1"/>
<line x1="385.8" y1="364.8" x2="385.8" y2="385.6" stroke="#a9a9a9" stroke-width="1"/>
<line x1="400.6" y1="340.7" x2="400.6" y2="385.8" stroke="#a9a9a9" stroke-width="1"/>
<line x1="430.1" y1="324.0" x2="430.1" y2="386.2" stroke="#a9a9a9" stroke-width="1"/>
<line x1="459.8" y1="251.8" x2="459.8" y2="386.7" stroke="#a9a9a9" stroke-width="1"/>
<line x1="474.8" y1="229.0" x2="474.8" y2="386.9" stroke="#a9a9a9" stroke-width="1"/>
<line x1="489.5" y1="206.3" x2="489.5" y2="387.1" stroke="#a9a9a9" stroke-width="1"/>
<line x1="519.1" y1="176.0" x2="519.1" y2="265.0" stroke="#a9a9a9" stroke-width="1"/>
<line x1="519.1" y1="324.0" x2="519.1" y2="387.5" stroke="#a9a9a9" stroke-width="1"/>
<line x1="548.8" y1="115.0" x2="548.8" y2="387.9" stroke="#a9a9a9" stroke-width="1"/>
<line x1="563.7" y1="84.9" x2="563.7" y2="388.1" stroke="#a9a9a9" stroke-width="1"/>
<line x1="578.5" y1="70.2" x2="578.5" y2="388.3" stroke="#a9a9a9" stroke-width="1"/>
<line x1="608.0" y1="66.0" x2="608.0" y2="117.0" stroke="#a9a9a9" stroke-width="1"/>
<line x1="608.0" y1="176.0" x2="608.0" y2="265.0" stroke="#a9a9a9" stroke-width="1"/>
<line x1="608.0" y1="324.0" x2="608.0" y2="388.7" stroke="#a9a9a9" stroke-width="1"/>
<line x1="637.8" y1="66.0" x2="637.8" y2="389.1" stroke="#a9a9a9" stroke-width="1"/>
<line x1="652.6" y1="66.0" x2="652.6" y2="389.3" stroke="#a9a9a9" stroke-width="1"/>
<line x1="667.4" y1="66.0" x2="667.4" y2="389.5" stroke="#a9a9a9" stroke-width="1"/>
<line x1="697.0" y1="66.0" x2="697.0" y2="117.0" stroke="#a9a9a9" stroke-width="1"/>
<line x1="697.0" y1="176.0" x2="697.0" y2="265.0" stroke="#a9a9a9" stroke-width="1"/>
<line x1="697.0" y1="324.0" x2="697.0" y2="389.9" stroke="#a9a9a9" stroke-width="1"/>
<line x1="726.7" y1="66.0" x2="726.7" y2="390.3" stroke="#a9a9a9" stroke-width="1"/>
<line x1="741.6" y1="66.0" x2="741.6" y2="390.5" stroke="#a9a9a9" stroke-width="1"/>
<line x1="756.4" y1="66.0" x2="756.4" y2="390.7" stroke="#a9a9a9" stroke-width="1"/>
<line x1="786.0" y1="66.0" x2="786.0" y2="117.0" stroke="#a9a9a9" stroke-width="1"/>
<line x1="786.0" y1="176.0" x2="786.0" y2="265.0" stroke="#a9a9a9" stroke-width="1"/>
<line x1="786.0" y1="324.0" x2="786.0" y2="391.2" stroke="#a9a9a9" stroke-width="1"/>
<line x1="815.7" y1="66.0" x2="815.7" y2="391.6" stroke="#a9a9a9" stroke-width="1"/>
<line x1="830.6" y1="66.0" x2="830.6" y2="391.8" stroke="#a9a9a9" stroke-width="1"/>
<line x1="845.4" y1="66.0" x2="845.4" y2="392.0" stroke="#a9a9a9" stroke-width="1"/>
<line x1="874.9" y1="66.0" x2="874.9" y2="117.0" stroke="#a9a9a9" stroke-width="1"/>
<line x1="874.9" y1="176.0" x2="874.9" y2="265.0" stroke="#a9a9a9" stroke-width="1"/>
<line x1="874.9" y1="324.0" x2="874.9" y2="392.4" stroke="#a9a9a9" stroke-width="1"/>
<line x1="904.6" y1="66.0" x2="904.6" y2="392.8" stroke="#a9a9a9" stroke-width="1"/>
<line x1="919.5" y1="66.0" x2="919.5" y2="393.0" stroke="#a9a9a9" stroke-width="1"/>
<line x1="934.3" y1="66.0" x2="934.3" y2="393.0" stroke="#a9a9a9" stroke-width="1"/>
<line x1="963.9" y1="66.0" x2="963.9" y2="117.0" stroke="#a9a9a9" stroke-width="1"/>
<line x1="963.9" y1="176.0" x2="963.9" y2="265.0" stroke="#a9a9a9" stroke-width="1"/>
<line x1="963.9" y1="324.0" x2="963.9" y2="393.0" stroke="#a9a9a9" stroke-width="1"/>
<line x1="993.6" y1="66.0" x2="993.6" y2="249.4" stroke="#a9a9a9" stroke-width="1"/>
<line x1="1008.5" y1="66.0" x2="1008.5" y2="250.4" stroke="#a9a9a9" stroke-width="1"/>
<line x1="1023.2" y1="66.0" x2="1023.2" y2="251.4" stroke="#a9a9a9" stroke-width="1"/>
<line x1="1052.8" y1="66.0" x2="1052.8" y2="117.0" stroke="#a9a9a9" stroke-width="1"/>
<line x1="1052.8" y1="176.0" x2="1052.8" y2="253.3" stroke="#a9a9a9" stroke-width="1"/>
<line x1="1082.5" y1="66.0" x2="1082.5" y2="255.3" stroke="#a9a9a9" stroke-width="1"/>
<line x1="1097.4" y1="66.0" x2="1097.4" y2="256.3" stroke="#a9a9a9" stroke-width="1"/>
<line x1="1112.2" y1="66.0" x2="1112.2" y2="257.3" stroke="#a9a9a9" stroke-width="1"/>
<line x1="1141.8" y1="66.0" x2="1141.8" y2="117.0" stroke="#a9a9a9" stroke-width="1"/>
<line x1="1141.8" y1="176.0" x2="1141.8" y2="259.3" stroke="#a9a9a9" stroke-width="1"/>
<line x1="1171.5" y1="66.0" x2="1171.5" y2="261.3" stroke="#a9a9a9" stroke-width="1"/>
<line x1="1186.3" y1="66.0" x2="1186.3" y2="262.2" stroke="#a9a9a9" stroke-width="1"/>
<line x1="1201.2" y1="66.0" x2="1201.2" y2="263.2" stroke="#a9a9a9" stroke-width="1"/>
<line x1="1230.7" y1="66.0" x2="1230.7" y2="117.0" stroke="#a9a9a9" stroke-width="1"/>
<line x1="1230.7" y1="176.0" x2="1230.7" y2="265.0" stroke="#a9a9a9" stroke-width="1"/>
<line x1="304.9" y1="515.0" x2="304.9" y2="592.0" stroke="#7a6a6a" stroke-width="2"/>
<line x1="304.9" y1="515.0" x2="304.9" y2="592.0" stroke="#fcf6f6" stroke-width="2" stroke-dasharray="3 1"/>
<line x1="314.3" y1="493.7" x2="314.3" y2="592.0" stroke="#7a6a6a" stroke-width="2"/>
<line x1="314.3" y1="493.7" x2="314.3" y2="592.0" stroke="#fcf6f6" stroke-width="2" stroke-dasharray="3 1"/>
<line x1="323.6" y1="472.9" x2="323.6" y2="592.0" stroke="#7a6a6a" stroke-width="2"/>
<line x1="323.6" y1="472.9" x2="323.6" y2="592.0" stroke="#fcf6f6" stroke-width="2" stroke-dasharray="3 1"/>
<line x1="342.1" y1="437.0" x2="342.1" y2="494.5" stroke="#7a6a6a" stroke-width="2"/>
<line x1="342.1" y1="437.0" x2="342.1" y2="494.5" stroke="#fcf6f6" stroke-width="2" stroke-dasharray="3 1"/>
<line x1="342.1" y1="529.0" x2="342.1" y2="586.5" stroke="#7a6a6a" stroke-width="2"/>
<line x1="342.1" y1="529.0" x2="342.1" y2="586.5" stroke="#fcf6f6" stroke-width="2" stroke-dasharray="3 1"/>
<line x1="360.5" y1="407.5" x2="360.5" y2="592.0" stroke="#7a6a6a" stroke-width="2"/>
<line x1="360.5" y1="407.5" x2="360.5" y2="592.0" stroke="#fcf6f6" stroke-width="2" stroke-dasharray="3 1"/>
<line x1="369.9" y1="392.7" x2="369.9" y2="592.0" stroke="#7a6a6a" stroke-width="2"/>
<line x1="369.9" y1="392.7" x2="369.9" y2="592.0" stroke="#fcf6f6" stroke-width="2" stroke-dasharray="3 1"/>
<line x1="379.2" y1="387.0" x2="379.2" y2="592.0" stroke="#7a6a6a" stroke-width="2"/>
<line x1="379.2" y1="387.0" x2="379.2" y2="592.0" stroke="#fcf6f6" stroke-width="2" stroke-dasharray="3 1"/>
<line x1="397.7" y1="387.3" x2="397.7" y2="402.5" stroke="#7a6a6a" stroke-width="2"/>
<line x1="397.7" y1="387.3" x2="397.7" y2="402.5" stroke="#fcf6f6" stroke-width="2" stroke-dasharray="3 1"/>
<line x1="397.7" y1="437.0" x2="397.7" y2="494.5" stroke="#7a6a6a" stroke-width="2"/>
<line x1="397.7" y1="437.0" x2="397.7" y2="494.5" stroke="#fcf6f6" stroke-width="2" stroke-dasharray="3 1"/>
<line x1="397.7" y1="529.0" x2="397.7" y2="586.5" stroke="#7a6a6a" stroke-width="2"/>
<line x1="397.7" y1="529.0" x2="397.7" y2="586.5" stroke="#fcf6f6" stroke-width="2" stroke-dasharray="3 1"/>
<line x1="416.1" y1="387.6" x2="416.1" y2="592.0" stroke="#7a6a6a" stroke-width="2"/>
<line x1="416.1" y1="387.6" x2="416.1" y2="592.0" stroke="#fcf6f6" stroke-width="2" stroke-dasharray="3 1"/>
<line x1="425.5" y1="387.7" x2="425.5" y2="592.0" stroke="#7a6a6a" stroke-width="2"/>
<line x1="425.5" y1="387.7" x2="425.5" y2="592.0" stroke="#fcf6f6" stroke-width="2" stroke-dasharray="3 1"/>
<line x1="434.8" y1="387.8" x2="434.8" y2="592.0" stroke="#7a6a6a" stroke-width="2"/>
<line x1="434.8" y1="387.8" x2="434.8" y2="592.0" stroke="#fcf6f6" stroke-width="2" stroke-dasharray="3 1"/>
<line x1="453.3" y1="388.1" x2="453.3" y2="402.5" stroke="#7a6a6a" stroke-width="2"/>
<line x1="453.3" y1="388.1" x2="453.3" y2="402.5" stroke="#fcf6f6" stroke-width="2" stroke-dasharray="3 1"/>
<line x1="453.3" y1="437.0" x2="453.3" y2="494.5" stroke="#7a6a6a" stroke-width="2"/>
<line x1="453.3" y1="437.0" x2="453.3" y2="494.5" stroke="#fcf6f6" stroke-width="2" stroke-dasharray="3 1"/>
<line x1="453.3" y1="529.0" x2="453.3" y2="586.5" stroke="#7a6a6a" stroke-width="2"/>
<line x1="453.3" y1="529.0" x2="453.3" y2="586.5" stroke="#fcf6f6" stroke-width="2" stroke-dasharray="3 1"/>
<line x1="471.7" y1="388.3" x2="471.7" y2="590.8" stroke="#7a6a6a" stroke-width="2"/>
<line x1="471.7" y1="388.3" x2="471.7" y2="590.8" stroke="#fcf6f6" stroke-width="2" stroke-dasharray="3 1"/>
<line x1="481.1" y1="388.4" x2="481.1" y2="590.3" stroke="#7a6a6a" stroke-width="2"/>
<line x1="481.1" y1="388.4" x2="481.1" y2="590.3" stroke="#fcf6f6" stroke-width="2" stroke-dasharray="3 1"/>
<line x1="490.4" y1="388.6" x2="490.4" y2="589.9" stroke="#7a6a6a" stroke-width="2"/>
<line x1="490.4" y1="388.6" x2="490.4" y2="589.9" stroke="#fcf6f6" stroke-width="2" stroke-dasharray="3 1"/>
<line x1="508.8" y1="388.8" x2="508.8" y2="402.5" stroke="#7a6a6a" stroke-width="2"/>
<line x1="508.8" y1="388.8" x2="508.8" y2="402.5" stroke="#fcf6f6" stroke-width="2" stroke-dasharray="3 1"/>
<line x1="508.8" y1="437.0" x2="508.8" y2="494.5" stroke="#7a6a6a" stroke-width="2"/>
<line x1="508.8" y1="437.0" x2="508.8" y2="494.5" stroke="#fcf6f6" stroke-width="2" stroke-dasharray="3 1"/>
<line x1="508.8" y1="529.0" x2="508.8" y2="586.5" stroke="#7a6a6a" stroke-width="2"/>
<line x1="508.8" y1="529.0" x2="508.8" y2="586.5" stroke="#fcf6f6" stroke-width="2" stroke-dasharray="3 1"/>
<line x1="527.2" y1="389.1" x2="527.2" y2="588.1" stroke="#7a6a6a" stroke-width="2"/>
<line x1="527.2" y1="389.1" x2="527.2" y2="588.1" stroke="#fcf6f6" stroke-width="2" stroke-dasharray="3 1"/>
<line x1="536.6" y1="389.2" x2="536.6" y2="587.7" stroke="#7a6a6a" stroke-width="2"/>
<line x1="536.6" y1="389.2" x2="536.6" y2="587.7" stroke="#fcf6f6" stroke-width="2" stroke-dasharray="3 1"/>
<line x1="545.9" y1="389.3" x2="545.9" y2="587.2" stroke="#7a6a6a" stroke-width="2"/>
<line x1="545.9" y1="389.3" x2="545.9" y2="587.2" stroke="#fcf6f6" stroke-width="2" stroke-dasharray="3 1"/>
<line x1="564.4" y1="389.6" x2="564.4" y2="402.5" stroke="#7a6a6a" stroke-width="2"/>
<line x1="564.4" y1="389.6" x2="564.4" y2="402.5" stroke="#fcf6f6" stroke-width="2" stroke-dasharray="3 1"/>
<line x1="564.4" y1="437.0" x2="564.4" y2="494.5" stroke="#7a6a6a" stroke-width="2"/>
<line x1="564.4" y1="437.0" x2="564.4" y2="494.5" stroke="#fcf6f6" stroke-width="2" stroke-dasharray="3 1"/>
<line x1="564.4" y1="529.0" x2="564.4" y2="586.3" stroke="#7a6a6a" stroke-width="2"/>
<line x1="564.4" y1="529.0" x2="564.4" y2="586.3" stroke="#fcf6f6" stroke-width="2" stroke-dasharray="3 1"/>
<line x1="582.8" y1="389.9" x2="582.8" y2="585.4" stroke="#7a6a6a" stroke-width="2"/>
<line x1="582.8" y1="389.9" x2="582.8" y2="585.4" stroke="#fcf6f6" stroke-width="2" stroke-dasharray="3 1"/>
<line x1="592.2" y1="390.0" x2="592.2" y2="585.0" stroke="#7a6a6a" stroke-width="2"/>
<line x1="592.2" y1="390.0" x2="592.2" y2="585.0" stroke="#fcf6f6" stroke-width="2" stroke-dasharray="3 1"/>
<line x1="601.5" y1="390.1" x2="601.5" y2="584.5" stroke="#7a6a6a" stroke-width="2"/>
<line x1="601.5" y1="390.1" x2="601.5" y2="584.5" stroke="#fcf6f6" stroke-width="2" stroke-dasharray="3 1"/>
<line x1="620.0" y1="390.4" x2="620.0" y2="402.5" stroke="#7a6a6a" stroke-width="2"/>
<line x1="620.0" y1="390.4" x2="620.0" y2="402.5" stroke="#fcf6f6" stroke-width="2" stroke-dasharray="3 1"/>
<line x1="620.0" y1="437.0" x2="620.0" y2="494.5" stroke="#7a6a6a" stroke-width="2"/>
<line x1="620.0" y1="437.0" x2="620.0" y2="494.5" stroke="#fcf6f6" stroke-width="2" stroke-dasharray="3 1"/>
<line x1="620.0" y1="529.0" x2="620.0" y2="583.6" stroke="#7a6a6a" stroke-width="2"/>
<line x1="620.0" y1="529.0" x2="620.0" y2="583.6" stroke="#fcf6f6" stroke-width="2" stroke-dasharray="3 1"/>
<line x1="638.4" y1="390.6" x2="638.4" y2="582.7" stroke="#7a6a6a" stroke-width="2"/>
<line x1="638.4" y1="390.6" x2="638.4" y2="582.7" stroke="#fcf6f6" stroke-width="2" stroke-dasharray="3 1"/>
<line x1="647.8" y1="390.8" x2="647.8" y2="582.3" stroke="#7a6a6a" stroke-width="2"/>
<line x1="647.8" y1="390.8" x2="647.8" y2="582.3" stroke="#fcf6f6" stroke-width="2" stroke-dasharray="3 1"/>
<line x1="657.1" y1="390.9" x2="657.1" y2="581.8" stroke="#7a6a6a" stroke-width="2"/>
<line x1="657.1" y1="390.9" x2="657.1" y2="581.8" stroke="#fcf6f6" stroke-width="2" stroke-dasharray="3 1"/>
<line x1="675.6" y1="391.1" x2="675.6" y2="402.5" stroke="#7a6a6a" stroke-width="2"/>
<line x1="675.6" y1="391.1" x2="675.6" y2="402.5" stroke="#fcf6f6" stroke-width="2" stroke-dasharray="3 1"/>
<line x1="675.6" y1="437.0" x2="675.6" y2="494.5" stroke="#7a6a6a" stroke-width="2"/>
<line x1="675.6" y1="437.0" x2="675.6" y2="494.5" stroke="#fcf6f6" stroke-width="2" stroke-dasharray="3 1"/>
<line x1="675.6" y1="529.0" x2="675.6" y2="580.9" stroke="#7a6a6a" stroke-width="2"/>
<line x1="675.6" y1="529.0" x2="675.6" y2="580.9" stroke="#fcf6f6" stroke-width="2" stroke-dasharray="3 1"/>
<line x1="694.0" y1="391.4" x2="694.0" y2="580.0" stroke="#7a6a6a" stroke-width="2"/>
<line x1="694.0" y1="391.4" x2="694.0" y2="580.0" stroke="#fcf6f6" stroke-width="2" stroke-dasharray="3 1"/>
<line x1="703.4" y1="391.5" x2="703.4" y2="579.6" stroke="#7a6a6a" stroke-width="2"/>
<line x1="703.4" y1="391.5" x2="703.4" y2="579.6" stroke="#fcf6f6" stroke-width="2" stroke-dasharray="3 1"/>
<line x1="712.7" y1="391.6" x2="712.7" y2="579.1" stroke="#7a6a6a" stroke-width="2"/>
<line x1="712.7" y1="391.6" x2="712.7" y2="579.1" stroke="#fcf6f6" stroke-width="2" stroke-dasharray="3 1"/>
<line x1="731.2" y1="391.9" x2="731.2" y2="402.5" stroke="#7a6a6a" stroke-width="2"/>
<line x1="731.2" y1="391.9" x2="731.2" y2="402.5" stroke="#fcf6f6" stroke-width="2" stroke-dasharray="3 1"/>
<line x1="731.2" y1="437.0" x2="731.2" y2="494.5" stroke="#7a6a6a" stroke-width="2"/>
<line x1="731.2" y1="437.0" x2="731.2" y2="494.5" stroke="#fcf6f6" stroke-width="2" stroke-dasharray="3 1"/>
<line x1="731.2" y1="529.0" x2="731.2" y2="578.2" stroke="#7a6a6a" stroke-width="2"/>
<line x1="731.2" y1="529.0" x2="731.2" y2="578.2" stroke="#fcf6f6" stroke-width="2" stroke-dasharray="3 1"/>
<line x1="749.6" y1="392.2" x2="749.6" y2="577.4" stroke="#7a6a6a" stroke-width="2"/>
<line x1="749.6" y1="392.2" x2="749.6" y2="577.4" stroke="#fcf6f6" stroke-width="2" stroke-dasharray="3 1"/>
<line x1="759.0" y1="392.3" x2="759.0" y2="576.9" stroke="#7a6a6a" stroke-width="2"/>
<line x1="759.0" y1="392.3" x2="759.0" y2="576.9" stroke="#fcf6f6" stroke-width="2" stroke-dasharray="3 1"/>
<line x1="768.3" y1="392.4" x2="768.3" y2="576.4" stroke="#7a6a6a" stroke-width="2"/>
<line x1="768.3" y1="392.4" x2="768.3" y2="576.4" stroke="#fcf6f6" stroke-width="2" stroke-dasharray="3 1"/>
<line x1="786.7" y1="392.7" x2="786.7" y2="402.5" stroke="#7a6a6a" stroke-width="2"/>
<line x1="786.7" y1="392.7" x2="786.7" y2="402.5" stroke="#fcf6f6" stroke-width="2" stroke-dasharray="3 1"/>
<line x1="786.7" y1="437.0" x2="786.7" y2="494.5" stroke="#7a6a6a" stroke-width="2"/>
<line x1="786.7" y1="437.0" x2="786.7" y2="494.5" stroke="#fcf6f6" stroke-width="2" stroke-dasharray="3 1"/>
<line x1="786.7" y1="529.0" x2="786.7" y2="575.6" stroke="#7a6a6a" stroke-width="2"/>
<line x1="786.7" y1="529.0" x2="786.7" y2="575.6" stroke="#fcf6f6" stroke-width="2" stroke-dasharray="3 1"/>
<line x1="805.1" y1="392.9" x2="805.1" y2="574.7" stroke="#7a6a6a" stroke-width="2"/>
<line x1="805.1" y1="392.9" x2="805.1" y2="574.7" stroke="#fcf6f6" stroke-width="2" stroke-dasharray="3 1"/>
<line x1="814.5" y1="393.1" x2="814.5" y2="574.2" stroke="#7a6a6a" stroke-width="2"/>
<line x1="814.5" y1="393.1" x2="814.5" y2="574.2" stroke="#fcf6f6" stroke-width="2" stroke-dasharray="3 1"/>
<line x1="823.8" y1="393.2" x2="823.8" y2="573.8" stroke="#7a6a6a" stroke-width="2"/>
<line x1="823.8" y1="393.2" x2="823.8" y2="573.8" stroke="#fcf6f6" stroke-width="2" stroke-dasharray="3 1"/>
<line x1="842.3" y1="393.4" x2="842.3" y2="402.5" stroke="#7a6a6a" stroke-width="2"/>
<line x1="842.3" y1="393.4" x2="842.3" y2="402.5" stroke="#fcf6f6" stroke-width="2" stroke-dasharray="3 1"/>
<line x1="842.3" y1="437.0" x2="842.3" y2="494.5" stroke="#7a6a6a" stroke-width="2"/>
<line x1="842.3" y1="437.0" x2="842.3" y2="494.5" stroke="#fcf6f6" stroke-width="2" stroke-dasharray="3 1"/>
<line x1="842.3" y1="529.0" x2="842.3" y2="572.9" stroke="#7a6a6a" stroke-width="2"/>
<line x1="842.3" y1="529.0" x2="842.3" y2="572.9" stroke="#fcf6f6" stroke-width="2" stroke-dasharray="3 1"/>
<line x1="860.7" y1="393.7" x2="860.7" y2="572.0" stroke="#7a6a6a" stroke-width="2"/>
<line x1="860.7" y1="393.7" x2="860.7" y2="572.0" stroke="#fcf6f6" stroke-width="2" stroke-dasharray="3 1"/>
<line x1="870.1" y1="393.8" x2="870.1" y2="571.5" stroke="#7a6a6a" stroke-width="2"/>
<line x1="870.1" y1="393.8" x2="870.1" y2="571.5" stroke="#fcf6f6" stroke-width="2" stroke-dasharray="3 1"/>
<line x1="879.4" y1="393.9" x2="879.4" y2="571.1" stroke="#7a6a6a" stroke-width="2"/>
<line x1="879.4" y1="393.9" x2="879.4" y2="571.1" stroke="#fcf6f6" stroke-width="2" stroke-dasharray="3 1"/>
<line x1="897.9" y1="394.2" x2="897.9" y2="402.5" stroke="#7a6a6a" stroke-width="2"/>
<line x1="897.9" y1="394.2" x2="897.9" y2="402.5" stroke="#fcf6f6" stroke-width="2" stroke-dasharray="3 1"/>
<line x1="897.9" y1="437.0" x2="897.9" y2="494.5" stroke="#7a6a6a" stroke-width="2"/>
<line x1="897.9" y1="437.0" x2="897.9" y2="494.5" stroke="#fcf6f6" stroke-width="2" stroke-dasharray="3 1"/>
<line x1="897.9" y1="529.0" x2="897.9" y2="570.2" stroke="#7a6a6a" stroke-width="2"/>
<line x1="897.9" y1="529.0" x2="897.9" y2="570.2" stroke="#fcf6f6" stroke-width="2" stroke-dasharray="3 1"/>
<line x1="916.3" y1="394.5" x2="916.3" y2="569.3" stroke="#7a6a6a" stroke-width="2"/>
<line x1="916.3" y1="394.5" x2="916.3" y2="569.3" stroke="#fcf6f6" stroke-width="2" stroke-dasharray="3 1"/>
<line x1="925.7" y1="394.6" x2="925.7" y2="568.8" stroke="#7a6a6a" stroke-width="2"/>
<line x1="925.7" y1="394.6" x2="925.7" y2="568.8" stroke="#fcf6f6" stroke-width="2" stroke-dasharray="3 1"/>
<line x1="935.0" y1="394.7" x2="935.0" y2="568.4" stroke="#7a6a6a" stroke-width="2"/>
<line x1="935.0" y1="394.7" x2="935.0" y2="568.4" stroke="#fcf6f6" stroke-width="2" stroke-dasharray="3 1"/>
<line x1="953.5" y1="395.0" x2="953.5" y2="402.5" stroke="#7a6a6a" stroke-width="2"/>
<line x1="953.5" y1="395.0" x2="953.5" y2="402.5" stroke="#fcf6f6" stroke-width="2" stroke-dasharray="3 1"/>
<line x1="953.5" y1="437.0" x2="953.5" y2="494.5" stroke="#7a6a6a" stroke-width="2"/>
<line x1="953.5" y1="437.0" x2="953.5" y2="494.5" stroke="#fcf6f6" stroke-width="2" stroke-dasharray="3 1"/>
<line x1="953.5" y1="529.0" x2="953.5" y2="586.5" stroke="#7a6a6a" stroke-width="2"/>
<line x1="953.5" y1="529.0" x2="953.5" y2="586.5" stroke="#fcf6f6" stroke-width="2" stroke-dasharray="3 1"/>
<line x1="971.9" y1="278.0" x2="971.9" y2="592.0" stroke="#7a6a6a" stroke-width="2"/>
<line x1="971.9" y1="278.0" x2="971.9" y2="592.0" stroke="#fcf6f6" stroke-width="2" stroke-dasharray="3 1"/>
<line x1="981.3" y1="250.1" x2="981.3" y2="592.0" stroke="#7a6a6a" stroke-width="2"/>
<line x1="981.3" y1="250.1" x2="981.3" y2="592.0" stroke="#fcf6f6" stroke-width="2" stroke-dasharray="3 1"/>
<line x1="990.6" y1="250.7" x2="990.6" y2="592.0" stroke="#7a6a6a" stroke-width="2"/>
<line x1="990.6" y1="250.7" x2="990.6" y2="592.0" stroke="#fcf6f6" stroke-width="2" stroke-dasharray="3 1"/>
<line x1="1009.1" y1="253.0" x2="1009.1" y2="310.5" stroke="#7a6a6a" stroke-width="2"/>
<line x1="1009.1" y1="253.0" x2="1009.1" y2="310.5" stroke="#fcf6f6" stroke-width="2" stroke-dasharray="3 1"/>
<line x1="1009.1" y1="345.0" x2="1009.1" y2="402.5" stroke="#7a6a6a" stroke-width="2"/>
<line x1="1009.1" y1="345.0" x2="1009.1" y2="402.5" stroke="#fcf6f6" stroke-width="2" stroke-dasharray="3 1"/>
<line x1="1009.1" y1="437.0" x2="1009.1" y2="494.5" stroke="#7a6a6a" stroke-width="2"/>
<line x1="1009.1" y1="437.0" x2="1009.1" y2="494.5" stroke="#fcf6f6" stroke-width="2" stroke-dasharray="3 1"/>
<line x1="1009.1" y1="529.0" x2="1009.1" y2="586.5" stroke="#7a6a6a" stroke-width="2"/>
<line x1="1009.1" y1="529.0" x2="1009.1" y2="586.5" stroke="#fcf6f6" stroke-width="2" stroke-dasharray="3 1"/>
<line x1="1027.5" y1="253.2" x2="1027.5" y2="592.0" stroke="#7a6a6a" stroke-width="2"/>
<line x1="1027.5" y1="253.2" x2="1027.5" y2="592.0" stroke="#fcf6f6" stroke-width="2" stroke-dasharray="3 1"/>
<line x1="1036.9" y1="253.8" x2="1036.9" y2="592.0" stroke="#7a6a6a" stroke-width="2"/>
<line x1="1036.9" y1="253.8" x2="1036.9" y2="592.0" stroke="#fcf6f6" stroke-width="2" stroke-dasharray="3 1"/>
<line x1="1046.2" y1="254.4" x2="1046.2" y2="592.0" stroke="#7a6a6a" stroke-width="2"/>
<line x1="1046.2" y1="254.4" x2="1046.2" y2="592.0" stroke="#fcf6f6" stroke-width="2" stroke-dasharray="3 1"/>
<line x1="1064.6" y1="255.6" x2="1064.6" y2="310.5" stroke="#7a6a6a" stroke-width="2"/>
<line x1="1064.6" y1="255.6" x2="1064.6" y2="310.5" stroke="#fcf6f6" stroke-width="2" stroke-dasharray="3 1"/>
<line x1="1064.6" y1="345.0" x2="1064.6" y2="402.5" stroke="#7a6a6a" stroke-width="2"/>
<line x1="1064.6" y1="345.0" x2="1064.6" y2="402.5" stroke="#fcf6f6" stroke-width="2" stroke-dasharray="3 1"/>
<line x1="1064.6" y1="437.0" x2="1064.6" y2="494.5" stroke="#7a6a6a" stroke-width="2"/>
<line x1="1064.6" y1="437.0" x2="1064.6" y2="494.5" stroke="#fcf6f6" stroke-width="2" stroke-dasharray="3 1"/>
<line x1="1064.6" y1="529.0" x2="1064.6" y2="586.5" stroke="#7a6a6a" stroke-width="2"/>
<line x1="1064.6" y1="529.0" x2="1064.6" y2="586.5" stroke="#fcf6f6" stroke-width="2" stroke-dasharray="3 1"/>
<line x1="1083.0" y1="256.9" x2="1083.0" y2="592.0" stroke="#7a6a6a" stroke-width="2"/>
<line x1="1083.0" y1="256.9" x2="1083.0" y2="592.0" stroke="#fcf6f6" stroke-width="2" stroke-dasharray="3 1"/>
<line x1="1092.4" y1="257.5" x2="1092.4" y2="592.0" stroke="#7a6a6a" stroke-width="2"/>
<line x1="1092.4" y1="257.5" x2="1092.4" y2="592.0" stroke="#fcf6f6" stroke-width="2" stroke-dasharray="3 1"/>
<line x1="1101.7" y1="258.1" x2="1101.7" y2="592.0" stroke="#7a6a6a" stroke-width="2"/>
<line x1="1101.7" y1="258.1" x2="1101.7" y2="592.0" stroke="#fcf6f6" stroke-width="2" stroke-dasharray="3 1"/>
<line x1="1120.2" y1="259.3" x2="1120.2" y2="310.5" stroke="#7a6a6a" stroke-width="2"/>
<line x1="1120.2" y1="259.3" x2="1120.2" y2="310.5" stroke="#fcf6f6" stroke-width="2" stroke-dasharray="3 1"/>
<line x1="1120.2" y1="345.0" x2="1120.2" y2="402.5" stroke="#7a6a6a" stroke-width="2"/>
<line x1="1120.2" y1="345.0" x2="1120.2" y2="402.5" stroke="#fcf6f6" stroke-width="2" stroke-dasharray="3 1"/>
<line x1="1120.2" y1="437.0" x2="1120.2" y2="494.5" stroke="#7a6a6a" stroke-width="2"/>
<line x1="1120.2" y1="437.0" x2="1120.2" y2="494.5" stroke="#fcf6f6" stroke-width="2" stroke-dasharray="3 1"/>
<line x1="1120.2" y1="529.0" x2="1120.2" y2="586.5" stroke="#7a6a6a" stroke-width="2"/>
<line x1="1120.2" y1="529.0" x2="1120.2" y2="586.5" stroke="#fcf6f6" stroke-width="2" stroke-dasharray="3 1"/>
<line x1="1138.6" y1="260.6" x2="1138.6" y2="592.0" stroke="#7a6a6a" stroke-width="2"/>
<line x1="1138.6" y1="260.6" x2="1138.6" y2="592.0" stroke="#fcf6f6" stroke-width="2" stroke-dasharray="3 1"/>
<line x1="1148.0" y1="261.2" x2="1148.0" y2="592.0" stroke="#7a6a6a" stroke-width="2"/>
<line x1="1148.0" y1="261.2" x2="1148.0" y2="592.0" stroke="#fcf6f6" stroke-width="2" stroke-dasharray="3 1"/>
<line x1="1157.3" y1="261.8" x2="1157.3" y2="592.0" stroke="#7a6a6a" stroke-width="2"/>
<line x1="1157.3" y1="261.8" x2="1157.3" y2="592.0" stroke="#fcf6f6" stroke-width="2" stroke-dasharray="3 1"/>
<line x1="1175.8" y1="263.0" x2="1175.8" y2="310.5" stroke="#7a6a6a" stroke-width="2"/>
<line x1="1175.8" y1="263.0" x2="1175.8" y2="310.5" stroke="#fcf6f6" stroke-width="2" stroke-dasharray="3 1"/>
<line x1="1175.8" y1="345.0" x2="1175.8" y2="402.5" stroke="#7a6a6a" stroke-width="2"/>
<line x1="1175.8" y1="345.0" x2="1175.8" y2="402.5" stroke="#fcf6f6" stroke-width="2" stroke-dasharray="3 1"/>
<line x1="1175.8" y1="437.0" x2="1175.8" y2="494.5" stroke="#7a6a6a" stroke-width="2"/>
<line x1="1175.8" y1="437.0" x2="1175.8" y2="494.5" stroke="#fcf6f6" stroke-width="2" stroke-dasharray="3 1"/>
<line x1="1175.8" y1="529.0" x2="1175.8" y2="586.5" stroke="#7a6a6a" stroke-width="2"/>
<line x1="1175.8" y1="529.0" x2="1175.8" y2="586.5" stroke="#fcf6f6" stroke-width="2" stroke-dasharray="3 1"/>
<line x1="1194.2" y1="264.3" x2="1194.2" y2="592.0" stroke="#7a6a6a" stroke-width="2"/>
<line x1="1194.2" y1="264.3" x2="1194.2" y2="592.0" stroke="#fcf6f6" stroke-width="2" stroke-dasharray="3 1"/>
<line x1="1203.6" y1="264.9" x2="1203.6" y2="592.0" stroke="#7a6a6a" stroke-width="2"/>
<line x1="1203.6" y1="264.9" x2="1203.6" y2="592.0" stroke="#fcf6f6" stroke-width="2" stroke-dasharray="3 1"/>
<line x1="1212.9" y1="265.5" x2="1212.9" y2="592.0" stroke="#7a6a6a" stroke-width="2"/>
<line x1="1212.9" y1="265.5" x2="1212.9" y2="592.0" stroke="#fcf6f6" stroke-width="2" stroke-dasharray="3 1"/>
<line x1="1231.4" y1="266.7" x2="1231.4" y2="310.5" stroke="#7a6a6a" stroke-width="2"/>
<line x1="1231.4" y1="266.7" x2="1231.4" y2="310.5" stroke="#fcf6f6" stroke-width="2" stroke-dasharray="3 1"/>
<line x1="1231.4" y1="345.0" x2="1231.4" y2="402.5" stroke="#7a6a6a" stroke-width="2"/>
<line x1="1231.4" y1="345.0" x2="1231.4" y2="402.5" stroke="#fcf6f6" stroke-width="2" stroke-dasharray="3 1"/>
<line x1="1231.4" y1="437.0" x2="1231.4" y2="494.5" stroke="#7a6a6a" stroke-width="2"/>
<line x1="1231.4" y1="437.0" x2="1231.4" y2="494.5" stroke="#fcf6f6" stroke-width="2" stroke-dasharray="3 1"/>
<line x1="1231.4" y1="529.0" x2="1231.4" y2="586.5" stroke="#7a6a6a" stroke-width="2"/>
<line x1="1231.4" y1="529.0" x2="1231.4" y2="586.5" stroke="#fcf6f6" stroke-width="2" stroke-dasharray="3 1"/>
<line x1="1249.8" y1="268.0" x2="1249.8" y2="592.0" stroke="#7a6a6a" stroke-width="2"/>
<line x1="1249.8" y1="268.0" x2="1249.8" y2="592.0" stroke="#fcf6f6" stroke-width="2" stroke-dasharray="3 1"/>
<line x1="1259.2" y1="268.6" x2="1259.2" y2="592.0" stroke="#7a6a6a" stroke-width="2"/>
<line x1="1259.2" y1="268.6" x2="1259.2" y2="592.0" stroke="#fcf6f6" stroke-width="2" stroke-dasharray="3 1"/>
<line x1="376.0" y1="385.5" x2="918.6" y2="393.0" stroke="#8a6a6a" stroke-width="1"/>
<line x1="918.6" y1="393.0" x2="970.0" y2="393.0" stroke="#8a6a6a" stroke-width="1"/>
<line x1="972.5" y1="248.0" x2="972.5" y2="393.0" stroke="#8a6a6a" stroke-width="1"/>
<line x1="972.5" y1="248.0" x2="1261.0" y2="267.5" stroke="#8a6a6a" stroke-width="1"/>
<polyline points="420.0,592.0 480.0,590.4 943.0,568.0 949.0,592.0" fill="none" stroke="#8a6a6a" stroke-width="1" stroke-linejoin="miter"/>
<line x1="501.0" y1="589.4" x2="501.0" y2="592.0" stroke="#5a4040" stroke-width="1"/>
<line x1="538.1" y1="587.6" x2="538.1" y2="592.0" stroke="#5a4040" stroke-width="1"/>
<line x1="575.2" y1="585.8" x2="575.2" y2="592.0" stroke="#5a4040" stroke-width="1"/>
<line x1="612.3" y1="584.0" x2="612.3" y2="592.0" stroke="#5a4040" stroke-width="1"/>
<line x1="649.4" y1="582.2" x2="649.4" y2="592.0" stroke="#5a4040" stroke-width="1"/>
<line x1="686.5" y1="580.4" x2="686.5" y2="592.0" stroke="#5a4040" stroke-width="1"/>
<line x1="723.6" y1="578.6" x2="723.6" y2="592.0" stroke="#5a4040" stroke-width="1"/>
<line x1="760.7" y1="576.8" x2="760.7" y2="592.0" stroke="#5a4040" stroke-width="1"/>
<line x1="797.8" y1="575.0" x2="797.8" y2="592.0" stroke="#5a4040" stroke-width="1"/>
<line x1="834.9" y1="573.2" x2="834.9" y2="592.0" stroke="#5a4040" stroke-width="1"/>
<line x1="872.0" y1="571.4" x2="872.0" y2="592.0" stroke="#5a4040" stroke-width="1"/>
<line x1="909.1" y1="569.6" x2="909.1" y2="592.0" stroke="#5a4040" stroke-width="1"/>
<line x1="181.0" y1="223.2" x2="318.7" y2="223.2" stroke="#604646" stroke-width="1"/>
<line x1="181.0" y1="270.8" x2="334.4" y2="270.8" stroke="#604646" stroke-width="1"/>
<line x1="181.0" y1="318.4" x2="304.4" y2="318.4" stroke="#604646" stroke-width="1"/>
<line x1="181.0" y1="366.1" x2="272.4" y2="366.1" stroke="#604646" stroke-width="1"/>
<line x1="181.0" y1="413.6" x2="245.2" y2="413.6" stroke="#604646" stroke-width="1"/>
<line x1="181.0" y1="461.1" x2="224.0" y2="461.1" stroke="#604646" stroke-width="1"/>
<line x1="181.0" y1="508.1" x2="204.4" y2="508.1" stroke="#604646" stroke-width="1"/>
<line x1="181.0" y1="555.5" x2="183.0" y2="555.5" stroke="#604646" stroke-width="1"/>
<line x1="222.8" y1="202.4" x2="222.8" y2="223.2" stroke="#604646" stroke-width="1"/>
<line x1="270.5" y1="202.4" x2="270.5" y2="223.2" stroke="#604646" stroke-width="1"/>
<line x1="318.3" y1="222.5" x2="318.3" y2="223.2" stroke="#604646" stroke-width="1"/>
<line x1="198.8" y1="223.2" x2="198.8" y2="270.8" stroke="#604646" stroke-width="1"/>
<line x1="246.8" y1="223.2" x2="246.8" y2="270.8" stroke="#604646" stroke-width="1"/>
<line x1="294.5" y1="223.2" x2="294.5" y2="270.8" stroke="#604646" stroke-width="1"/>
<line x1="222.8" y1="270.8" x2="222.8" y2="318.4" stroke="#604646" stroke-width="1"/>
<line x1="270.5" y1="270.8" x2="270.5" y2="318.4" stroke="#604646" stroke-width="1"/>
<line x1="318.3" y1="270.8" x2="318.3" y2="299.5" stroke="#604646" stroke-width="1"/>
<line x1="198.8" y1="318.4" x2="198.8" y2="366.1" stroke="#604646" stroke-width="1"/>
<line x1="246.8" y1="318.4" x2="246.8" y2="366.1" stroke="#604646" stroke-width="1"/>
<line x1="294.5" y1="318.4" x2="294.5" y2="331.8" stroke="#604646" stroke-width="1"/>
<line x1="222.8" y1="366.1" x2="222.8" y2="413.6" stroke="#604646" stroke-width="1"/>
<line x1="270.5" y1="366.1" x2="270.5" y2="369.2" stroke="#604646" stroke-width="1"/>
<line x1="198.8" y1="413.6" x2="198.8" y2="461.1" stroke="#604646" stroke-width="1"/>
<line x1="222.8" y1="461.1" x2="222.8" y2="464.1" stroke="#604646" stroke-width="1"/>
<line x1="198.8" y1="508.1" x2="198.8" y2="520.6" stroke="#604646" stroke-width="1"/>
<polyline points="181.0,124.5 399.0,124.5 447.0,98.0 452.0,92.0 466.0,66.0" fill="none" stroke="#5a5a98" stroke-width="1" stroke-linejoin="miter"/>
<polyline points="181.0,202.4 307.4,202.4 339.5,261.7 318.0,300.0 288.4,340.0 251.6,400.0 232.7,440.0 208.1,500.0 190.0,540.0 181.0,560.0" fill="none" stroke="#5a5a98" stroke-width="1" stroke-linejoin="miter"/>
<polyline points="585.0,66.0 567.3,77.5 549.8,113.5 506.7,180.0 428.4,300.0 401.0,340.0 364.2,400.0 337.4,440.0 310.6,500.0 293.1,540.0 270.0,592.0" fill="none" stroke="#5a5a98" stroke-width="1" stroke-linejoin="miter"/>
<path d="M181,142.7 L405,142.7 C432,142.7 450,132 465,111 L493,66" fill="none" stroke="#7a3442" stroke-width="1"/>
<path d="M181,184.9 L297,184.9 C332,185 357,214 358,256 C358.5,275 354,290 344,300 L317.3,340 L279,400 L258,440 L234.4,500 L215.6,540 L191,592" fill="none" stroke="#7a3442" stroke-width="1"/>
<polyline points="546.0,66.0 478.0,180.0 401.0,300.0 374.2,340.0 335.3,400.0 310.0,440.0 286.2,500.0 267.5,540.0 243.0,592.0" fill="none" stroke="#7a3442" stroke-width="1" stroke-linejoin="miter"/>
<polyline points="176.0,243.0 222.3,233.0 257.0,255.6 264.0,295.5 240.5,328.5 201.4,335.5 176.0,320.0" fill="none" stroke="#f4f4f4" stroke-width="3" stroke-linejoin="miter"/>
<polygon points="166.9,310.3 212.7,231.3 257.9,310.3 166.9,310.3" fill="none" stroke="#f4f4f4" stroke-width="3" stroke-linejoin="miter"/>
<polygon points="363.9,373.3 445.0,252.7 920.2,256.4 918.6,392.3" fill="none" stroke="#3ad8e2" stroke-width="3" stroke-linejoin="miter"/>
<polyline points="413.9,304.0 661.8,313.3 661.8,383.6" fill="none" stroke="#3ad8e2" stroke-width="3" stroke-linejoin="miter"/>
<polyline points="617.0,252.4 654.5,183.2 856.0,183.0" fill="none" stroke="#a0588e" stroke-width="1" stroke-linejoin="miter"/>
<text x="193.5" y="104.8" font-family="Liberation Sans" font-weight="bold" font-size="51" fill="#f6f6f6" stroke="#f6f6f6" stroke-width="2.2" stroke-linejoin="round" textLength="43" lengthAdjust="spacingAndGlyphs">M</text>
<text x="163" y="104.5" font-family="Liberation Sans" font-weight="bold" font-size="51" fill="#f6f6f6" stroke="#f6f6f6" stroke-width="2.5" stroke-linejoin="round" textLength="27" lengthAdjust="spacingAndGlyphs">3</text>
<text x="667" y="168.5" font-family="Liberation Sans" font-weight="bold" font-size="31.5" fill="#e52ae5" stroke="#e52ae5" stroke-width="1.6" stroke-linejoin="round" textLength="180" lengthAdjust="spacingAndGlyphs">Đất quy hoạch</text>
<text x="666.5" y="218" font-family="Liberation Sans" font-weight="bold" font-size="31.5" fill="#e52ae5" stroke="#e52ae5" stroke-width="1.6" stroke-linejoin="round" textLength="166" lengthAdjust="spacingAndGlyphs">Đất ở dài hạn</text>
<text x="303" y="422" font-family="Liberation Sans" font-weight="bold" font-size="30" fill="#f4f4f4" stroke="#f4f4f4" stroke-width="1.6" stroke-linejoin="round" textLength="246" lengthAdjust="spacingAndGlyphs" transform="rotate(-56 303 422)">Đ. LÊ TẤN BÊ - 16M</text>
<rect x="192.5" y="572" width="10" height="10" fill="none" stroke="#c8c8c8" stroke-width="1"/>
<line x1="202.5" y1="577.0" x2="248.0" y2="577.0" stroke="#c8c8c8" stroke-width="1"/>
<polygon points="248.0,572.0 260.0,577.0 248.0,582.0" fill="none" stroke="#c8c8c8" stroke-width="1" stroke-linejoin="miter"/>
<line x1="197.5" y1="572.0" x2="197.5" y2="525.5" stroke="#c8c8c8" stroke-width="1"/>
<polygon points="192.5,525.5 197.5,514.5 202.5,525.5" fill="none" stroke="#c8c8c8" stroke-width="1" stroke-linejoin="miter"/>
<path d="M270,572 L279,582 M279,572 L270,582" fill="none" stroke="#c8c8c8" stroke-width="1"/>
<path d="M192.5,493.5 L197.5,499.5 L202.5,493.5 M197.5,499.5 V506" fill="none" stroke="#c8c8c8" stroke-width="1"/>
<line x1="1010.0" y1="542.5" x2="1261.0" y2="542.5" stroke="#bcbcbc" stroke-width="1"/>
<line x1="1175.5" y1="380.0" x2="1175.5" y2="592.0" stroke="#bcbcbc" stroke-width="1"/>
<rect x="1169.5" y="537" width="11" height="11" fill="none" stroke="#bcbcbc" stroke-width="1"/>
</svg>
<line x1="180.5" y1="66" x2="180.5" y2="592" stroke="#c8c8c8" stroke-width="1"/>
<rect x="1262" y="66" width="18" height="261" fill="#f0f0f0"/>
<line x1="1262.5" y1="66" x2="1262.5" y2="327" stroke="#c8c8c8" stroke-width="1"/>
<line x1="1265" y1="69.5" x2="1279" y2="69.5" stroke="#c0c0c0" stroke-width="1"/>
<line x1="1265" y1="71.5" x2="1279" y2="71.5" stroke="#c0c0c0" stroke-width="1"/>
<rect x="181" y="592" width="1080" height="13" fill="#f0f0f0"/>
<rect x="183.5" y="593.5" width="11" height="10" fill="#f0f0f0" stroke="#c0c0c0" stroke-width="0.8"/>
<rect x="195.5" y="593.5" width="11" height="10" fill="#f0f0f0" stroke="#c0c0c0" stroke-width="0.8"/>
<rect x="207.5" y="593.5" width="11" height="10" fill="#f0f0f0" stroke="#c0c0c0" stroke-width="0.8"/>
<rect x="219.5" y="593.5" width="11" height="10" fill="#f0f0f0" stroke="#c0c0c0" stroke-width="0.8"/>
<path d="M186,595 v7 M187,598.5 l4,-3.5 v7z" fill="#222" stroke="#222" stroke-width="0.8"/>
<path d="M202,595.5 l-3,3 l3,3z" fill="#222" stroke="none" stroke-width="1"/>
<path d="M211,595.5 l3,3 l-3,3z" fill="#222" stroke="none" stroke-width="1"/>
<path d="M222,595 l4,3.5 l-4,3.5z M227,595 v7" fill="#222" stroke="#222" stroke-width="0.8"/>
<path d="M232,592 L236,603 H258 L262,592z" fill="#222" stroke="none" stroke-width="1"/>
<text x="238" y="601.5" font-family="Liberation Sans" font-size="9" fill="#fff" textLength="20" lengthAdjust="spacingAndGlyphs">Model</text>
<path d="M262,592 L264,603 H290 L293,592" fill="#fff" stroke="#555" stroke-width="0.8"/>
<text x="265" y="601.5" font-family="Liberation Sans" font-size="9" fill="#222" textLength="24" lengthAdjust="spacingAndGlyphs">Layout1</text>
<line x1="181" y1="592.5" x2="1261" y2="592.5" stroke="#888" stroke-width="1"/>
<line x1="162" y1="607.5" x2="1280" y2="607.5" stroke="#8a8a8a" stroke-width="1"/>
<line x1="162" y1="609.5" x2="1280" y2="609.5" stroke="#e8e8e8" stroke-width="1"/>
<rect x="162" y="610" width="1118" height="70" fill="#f0f0f0"/>
<line x1="167.5" y1="614" x2="167.5" y2="678" stroke="#c8c8c8" stroke-width="1"/>
<line x1="170.5" y1="614" x2="170.5" y2="678" stroke="#c8c8c8" stroke-width="1"/>
<rect x="174" y="614" width="1100" height="63" fill="#ffffff"/>
<line x1="174" y1="614.5" x2="1274" y2="614.5" stroke="#999" stroke-width="1"/>
<line x1="174.5" y1="614" x2="174.5" y2="677" stroke="#999" stroke-width="1"/>
<line x1="174" y1="663.5" x2="1274" y2="663.5" stroke="#aaa" stroke-width="1"/>
<text x="176" y="624.8" font-family="Liberation Mono" font-size="9.2" fill="#2a2a2a" textLength="41.770875000000004" lengthAdjust="spacingAndGlyphs">Command:</text>
<text x="176" y="635.4" font-family="Liberation Mono" font-size="9.2" fill="#2a2a2a" textLength="41.770875000000004" lengthAdjust="spacingAndGlyphs">Command:</text>
<text x="176" y="646.0" font-family="Liberation Mono" font-size="9.2" fill="#2a2a2a" textLength="41.770875000000004" lengthAdjust="spacingAndGlyphs">Command:</text>
<text x="176" y="656.5999999999999" font-family="Liberation Mono" font-size="9.2" fill="#2a2a2a" textLength="88.763109375" lengthAdjust="spacingAndGlyphs">Command: *Cancel*</text>
<text x="176" y="674" font-family="Liberation Mono" font-size="9.2" fill="#2a2a2a" textLength="41.770875000000004" lengthAdjust="spacingAndGlyphs">Command:</text>
<rect x="1264" y="615" width="10" height="48" fill="#f0f0f0"/>
<path d="M1266.5,623.5 l2.5,-2.5 l2.5,2.5" fill="none" stroke="#333" stroke-width="1"/>
<rect x="1264" y="640.5" width="10" height="10.5" fill="#cdcdcd"/>
<path d="M1266.5,656.5 l2.5,2.5 l2.5,-2.5" fill="none" stroke="#333" stroke-width="1"/>
<line x1="162.5" y1="66" x2="162.5" y2="677" stroke="#8c8c8c" stroke-width="1"/>
<line x1="0" y1="677.5" x2="162" y2="677.5" stroke="#d8d8d8" stroke-width="1"/>
<rect x="0" y="680" width="1280" height="13" fill="#f0f0f0"/>
<rect x="3.5" y="681.5" width="155" height="11" fill="#eaeaea" stroke="#cccccc" stroke-width="1"/>
<text x="5" y="690.5" font-family="Liberation Sans" font-size="9" fill="#111" textLength="118" lengthAdjust="spacingAndGlyphs">593512.2435, 1185174.1307, 0.0000</text>
<line x1="184.5" y1="681" x2="184.5" y2="693" stroke="#c0c0c0" stroke-width="1"/>
<text x="163" y="690.5" font-family="Liberation Sans" font-size="9" fill="#111" textLength="20" lengthAdjust="spacingAndGlyphs">SNAP</text>
<line x1="207.5" y1="681" x2="207.5" y2="693" stroke="#c0c0c0" stroke-width="1"/>
<text x="187.5" y="690.5" font-family="Liberation Sans" font-size="9" fill="#111" textLength="18.5" lengthAdjust="spacingAndGlyphs">GRID</text>
<line x1="238.5" y1="681" x2="238.5" y2="693" stroke="#c0c0c0" stroke-width="1"/>
<text x="211" y="690.5" font-family="Liberation Sans" font-size="9" fill="#111" textLength="26" lengthAdjust="spacingAndGlyphs">ORTHO</text>
<line x1="268.5" y1="681" x2="268.5" y2="693" stroke="#c0c0c0" stroke-width="1"/>
<text x="242" y="690.5" font-family="Liberation Sans" font-size="9" fill="#111" textLength="25" lengthAdjust="spacingAndGlyphs">POLAR</text>
<rect x="269.2" y="681.5" width="29.900000000000034" height="11" fill="#f4f4f4" stroke="#777" stroke-width="1"/>
<line x1="299.1" y1="681" x2="299.1" y2="693" stroke="#c0c0c0" stroke-width="1"/>
<text x="270.7" y="690.5" font-family="Liberation Sans" font-size="9" fill="#111" textLength="26.900000000000034" lengthAdjust="spacingAndGlyphs">OSNAP</text>
<line x1="333.5" y1="681" x2="333.5" y2="693" stroke="#c0c0c0" stroke-width="1"/>
<text x="302" y="690.5" font-family="Liberation Sans" font-size="9" fill="#111" textLength="30" lengthAdjust="spacingAndGlyphs">OTRACK</text>
<rect x="333.5" y="681.5" width="25.399999999999977" height="11" fill="#f4f4f4" stroke="#777" stroke-width="1"/>
<line x1="358.9" y1="681" x2="358.9" y2="693" stroke="#c0c0c0" stroke-width="1"/>
<text x="335" y="690.5" font-family="Liberation Sans" font-size="9" fill="#111" textLength="22.399999999999977" lengthAdjust="spacingAndGlyphs">DUCS</text>
<line x1="379.5" y1="681" x2="379.5" y2="693" stroke="#c0c0c0" stroke-width="1"/>
<text x="361.3" y="690.5" font-family="Liberation Sans" font-size="9" fill="#111" textLength="16.69999999999999" lengthAdjust="spacingAndGlyphs">DYN</text>
<line x1="399.9" y1="681" x2="399.9" y2="693" stroke="#c0c0c0" stroke-width="1"/>
<text x="382" y="690.5" font-family="Liberation Sans" font-size="9" fill="#111" textLength="16.399999999999977" lengthAdjust="spacingAndGlyphs">LWT</text>
<rect x="400.8" y="681.5" width="31.19999999999999" height="11" fill="#f4f4f4" stroke="#777" stroke-width="1"/>
<line x1="432.0" y1="681" x2="432.0" y2="693" stroke="#c0c0c0" stroke-width="1"/>
<text x="402.3" y="690.5" font-family="Liberation Sans" font-size="9" fill="#111" textLength="28.19999999999999" lengthAdjust="spacingAndGlyphs">MODEL</text>
<line x1="1209.5" y1="681" x2="1209.5" y2="693" stroke="#c8c8c8" stroke-width="1"/>
<path d="M1215,691.5 l3.8,-7 l3.8,7z" fill="#e8cc40" stroke="#8a7a30" stroke-width="0.6"/>
<rect x="1218.2" y="686.5" width="1.2" height="3" fill="#333"/>
<rect x="1225.5" y="685.5" width="8" height="6" fill="#c8a828" stroke="#6a5a18" stroke-width="0.7"/>
<path d="M1230,685.5 v-2 a2.5,2.5 0 0,1 5,0 v1.5" fill="none" stroke="#6a5a18" stroke-width="1.2"/>
<rect x="1239.5" y="682" width="5" height="9" fill="#5a7080" stroke="#344" stroke-width="0.6"/>
<circle cx="1246" cy="688.5" r="3" fill="#30b040"/>
<path d="M1256,687.5 h5 l-2.5,3z" fill="#111" stroke="none" stroke-width="1"/>
<rect x="1266.5" y="680.5" width="11" height="11" fill="#a8cce8" stroke="#6a8aa8" stroke-width="1.2"/>
<rect x="0" y="694" width="1280" height="26" fill="#1d2a30"/>
<rect x="10" y="701" width="5.5" height="5" fill="#f4f4f4"/>
<rect x="16.5" y="701" width="5.5" height="5" fill="#f4f4f4"/>
<rect x="10" y="707" width="5.5" height="5" fill="#f4f4f4"/>
<rect x="16.5" y="707" width="5.5" height="5" fill="#f4f4f4"/>
<rect x="32" y="694" width="192" height="26" fill="#f0f0f0"/>
<circle cx="46.5" cy="705" r="4" fill="none" stroke="#333" stroke-width="1.3"/>
<line x1="43.5" y1="708.5" x2="40.5" y2="712" stroke="#333" stroke-width="1.5"/>
<text x="58.5" y="711" font-family="Liberation Sans" font-size="11.5" fill="#3a3a3a" textLength="85" lengthAdjust="spacingAndGlyphs">Type here to search</text>
<path d="M192,699 l2.2,5 l5,2 l-5,2 l-2.2,5 l-2.2,-5 l-5,-2 l5,-2z" fill="#f6c028" stroke="none" stroke-width="1"/>
<path d="M207,704 l1.2,2.5 l2.5,1 l-2.5,1 l-1.2,2.5 l-1.2,-2.5 l-2.5,-1 l2.5,-1z" fill="#f0c850" stroke="none" stroke-width="1"/>
<path d="M179,710 l1,2 l2,1 l-2,1 l-1,2 l-1,-2 l-2,-1 l2,-1z" fill="#38a8e0" stroke="none" stroke-width="1"/>
<path d="M236,701 h7 v11 h-7z M245,702 v9 M247,702 v9" fill="none" stroke="#cfd4d6" stroke-width="1.2"/>
<path d="M267,712 q-1,-10 5,-12 q7,-1 8,5 q1,8 -6,8z" fill="#5a8ef0" stroke="none" stroke-width="1"/>
<path d="M269,710 q0,-7 5,-8 q5,0 5,4" fill="none" stroke="#f06ab0" stroke-width="3"/>
<circle cx="306" cy="706" r="8" fill="#1b86d8"/>
<path d="M300,709 q3,4 9,2 q-6,1 -5,-5 q2,-3 7,-1 q-2,-5 -8,-3 q-5,3 -3,7z" fill="#3cd07a"/>
<rect x="331" y="701" width="16" height="11" fill="#f2c84a"/>
<rect x="331" y="700" width="7" height="3" fill="#d9a520"/>
<line x1="326" y1="719" x2="352" y2="719" stroke="#a6b8c6" stroke-width="2"/>
<rect x="364" y="700" width="16" height="13" fill="#f2f2f2" rx="2"/>
<rect x="368" y="703" width="3.5" height="3.5" fill="#e84c3c"/>
<rect x="372.5" y="703" width="3.5" height="3.5" fill="#5cb85c"/>
<rect x="368" y="707.5" width="3.5" height="3.5" fill="#3a7de0"/>
<rect x="372.5" y="707.5" width="3.5" height="3.5" fill="#f5b82e"/>
<rect x="399" y="700" width="13" height="12" fill="#0f5fb0" rx="2"/>
<rect x="396" y="703" width="9" height="8" fill="#1c86e0"/>
<text x="400.5" y="709.5" font-family="Liberation Sans" font-size="7" fill="#fff" font-weight="bold" text-anchor="middle">o</text>
<circle cx="437.5" cy="706" r="8" fill="#e0453a"/>
<path d="M437.5,706 L444.5,710 A8,8 0 0,1 430,709z" fill="#2fa84f" stroke="none" stroke-width="1"/>
<path d="M437.5,706 L444.5,710 A8,8 0 0,0 445,702z" fill="#f5c52a" stroke="none" stroke-width="1"/>
<circle cx="437.5" cy="706" r="3.6" fill="#3a7de0" stroke="#fff" stroke-width="1.3"/>
<rect x="461" y="700" width="18" height="12" fill="#e8222a" rx="3"/>
<path d="M468,703 l4.5,3 l-4.5,3z" fill="#fff" stroke="none" stroke-width="1"/>
<rect x="495" y="700" width="15" height="11" fill="#f4f4f4"/>
<rect x="497" y="702" width="4" height="3" fill="#c85060"/>
<rect x="503" y="702" width="4" height="3" fill="#c85060"/>
<rect x="500" y="706" width="4" height="4" fill="#c85060"/>
<rect x="529" y="699" width="12" height="14" fill="#7aa8c0"/>
<rect x="530.5" y="700.5" width="9" height="3" fill="#d8e8f0"/>
<rect x="530.5" y="705.0" width="2.2" height="1.8" fill="#e8f0f4"/>
<rect x="530.5" y="707.6" width="2.2" height="1.8" fill="#e8f0f4"/>
<rect x="530.5" y="710.2" width="2.2" height="1.8" fill="#e8f0f4"/>
<rect x="533.7" y="705.0" width="2.2" height="1.8" fill="#e8f0f4"/>
<rect x="533.7" y="707.6" width="2.2" height="1.8" fill="#e8f0f4"/>
<rect x="533.7" y="710.2" width="2.2" height="1.8" fill="#e8f0f4"/>
<rect x="536.9" y="705.0" width="2.2" height="1.8" fill="#e8f0f4"/>
<rect x="536.9" y="707.6" width="2.2" height="1.8" fill="#e8f0f4"/>
<rect x="536.9" y="710.2" width="2.2" height="1.8" fill="#e8f0f4"/>
<circle cx="568" cy="706" r="8" fill="#1a7ae0"/>
<ellipse cx="568" cy="706" rx="6" ry="5" fill="#fff"/>
<text x="568" y="708.5" font-family="Liberation Sans" font-size="5" fill="#1a7ae0" font-weight="bold" text-anchor="middle">Zalo</text>
<line x1="555" y1="719" x2="581" y2="719" stroke="#a6b8c6" stroke-width="2"/>
<rect x="585" y="694" width="31" height="26" fill="#3c4a50"/>
<rect x="592.5" y="699" width="16" height="14" fill="#2e8a78" stroke="#d8eee8" stroke-width="1"/>
<path d="M595,711 l3.5,-9 l3.5,9 M605,702 v9" fill="none" stroke="#fff" stroke-width="1.1"/>
<line x1="585" y1="719" x2="616" y2="719" stroke="#a6b8c6" stroke-width="2"/>
<circle cx="1016.5" cy="708" r="4" fill="#b8d0ec"/><circle cx="1022" cy="706" r="5" fill="#b8d0ec"/>
<rect x="1011" y="708" width="17" height="5.5" fill="#b8d0ec" rx="2.7"/>
<circle cx="1021.5" cy="700.5" r="3.2" fill="#d83a3a"/>
<text x="1021.5" y="702.5" font-family="Liberation Sans" font-size="5" fill="#fff" font-weight="bold" text-anchor="middle">2</text>
<text x="1032" y="710.5" font-family="Liberation Sans" font-size="10" fill="#f0f0f0" textLength="20" lengthAdjust="spacingAndGlyphs">27°C</text>
<text x="1057.5" y="710.5" font-family="Liberation Sans" font-size="10" fill="#f0f0f0" textLength="44" lengthAdjust="spacingAndGlyphs">Nhiều mây</text>
<path d="M1118,709 l4,-4 l4,4" fill="none" stroke="#eee" stroke-width="1.1"/>
<rect x="1134.5" y="702.5" width="6" height="8" fill="none" stroke="#ddd" stroke-width="0.9"/>
<path d="M1135,713 h5 M1135,700.5 h5" fill="none" stroke="#ddd" stroke-width="0.8"/>
<rect x="1149.5" y="702.5" width="9" height="6" fill="none" stroke="#ddd" stroke-width="0.9"/>
<path d="M1152,711 h5 M1154,708.5 v2.5" fill="none" stroke="#ddd" stroke-width="0.8"/>
<path d="M1164.5,704.5 h2 l3,-3 v10 l-3,-3 h-2z" fill="none" stroke="#ddd" stroke-width="0.9"/>
<path d="M1171,704.5 l3,3 M1174,704.5 l-3,3" fill="none" stroke="#ddd" stroke-width="0.9"/>
<text x="1181.5" y="710" font-family="Liberation Sans" font-size="9" fill="#eee" textLength="15" lengthAdjust="spacingAndGlyphs">ENG</text>
<text x="1222" y="703" font-family="Liberation Sans" font-size="9.5" fill="#f0f0f0" text-anchor="middle" textLength="28" lengthAdjust="spacingAndGlyphs">8:02 AM</text>
<text x="1222" y="715.5" font-family="Liberation Sans" font-size="9.5" fill="#f0f0f0" text-anchor="middle" textLength="34" lengthAdjust="spacingAndGlyphs">11/7/2025</text>
<path d="M1253,699.5 h11 v9 h-4 l-3,3 v-3 h-4z" fill="#f0f0f0" stroke="#f0f0f0" stroke-width="0.6"/>
<path d="M1255,702 h7 M1255,704 h7 M1255,706 h5" fill="none" stroke="#1d2a30" stroke-width="0.8"/>
<circle cx="1262" cy="712" r="3.6" fill="#1d2a30" stroke="#ddd" stroke-width="0.8"/>
<text x="1262" y="714" font-family="Liberation Sans" font-size="5" fill="#eee" text-anchor="middle">1</text>
<path d="M166.5,84.5 L176.5,76.5" fill="none" stroke="#222" stroke-width="1.2"/>
<path d="M166.5,99 L176.5,91" fill="none" stroke="#222" stroke-width="1.2"/>
<circle cx="167.0" cy="98.5" r="1.3" fill="#222"/>
<circle cx="176.0" cy="91.5" r="1.3" fill="#222"/>
<path d="M166.5,112.5 H174.5 Q176.5,110.5 174.5,107.5 L171.5,107.5" fill="none" stroke="#222" stroke-width="1.1"/>
<path d="M171.5,119 L176.5,123 L174.5,128 H168.5 L166.5,123Z" fill="none" stroke="#222" stroke-width="1.1"/>
<rect x="166.5" y="135.5" width="10" height="7" fill="none" stroke="#222" stroke-width="1.1"/>
<path d="M166.5,157.5 Q167.5,149.5 176.5,149.5" fill="none" stroke="#222" stroke-width="1.1"/>
<circle cx="171.5" cy="168" r="5" fill="none" stroke="#222" stroke-width="1.1"/>
<path d="M171.5,168 l3,-3" fill="none" stroke="#222" stroke-width="1"/>
<path d="M167.5,186 q-2,-4 1,-6 q2,-3 5,-1 q4,0 3,4 q2,3 -2,4 q-3,2 -7,-1z" fill="none" stroke="#222" stroke-width="1"/>
<path d="M166.5,201 q3,-8 5,-2 q2,5 5,-3" fill="none" stroke="#222" stroke-width="1.1"/>
<ellipse cx="171.5" cy="212.5" rx="5" ry="3" fill="none" stroke="#222" stroke-width="1.1"/>
<path d="M175.5,225 A5,3 0 1,1 168.5,224" fill="none" stroke="#222" stroke-width="1.1"/>
<rect x="167.5" y="238" width="6" height="6" fill="none" stroke="#222" stroke-width="1"/>
<rect x="170.5" y="241" width="6" height="6" fill="none" stroke="#222" stroke-width="1"/>
<rect x="167.5" y="252.5" width="5" height="5" fill="none" stroke="#222" stroke-width="1"/>
<rect x="171.5" y="256.5" width="5" height="5" fill="none" stroke="#222" stroke-width="1"/>
<circle cx="171.5" cy="271" r="1.2" fill="#222"/>
<rect x="166.5" y="282" width="10" height="8" fill="#8aa" stroke="#234" stroke-width="1"/>
<path d="M168.5,282 v8 M174.5,282 v8" fill="none" stroke="#234" stroke-width="1"/>
<rect x="166.5" y="296.5" width="10" height="8" fill="#556" stroke="#123" stroke-width="1"/>
<path d="M166.5,319 V313 Q171.5,309 176.5,314 V319Z" fill="#cde" stroke="#345" stroke-width="1"/>
<rect x="166.5" y="326" width="10" height="9" fill="#9bd" stroke="#246" stroke-width="1"/>
<line x1="166.5" y1="329" x2="176.5" y2="329" stroke="#246" stroke-width="0.8"/>
<text x="171.5" y="350" font-family="Liberation Sans" font-size="13" fill="#222" text-anchor="middle">A</text>
<line x1="164" y1="356.5" x2="179" y2="356.5" stroke="#b8b8b8" stroke-width="1"/>
<line x1="164" y1="358.5" x2="179" y2="358.5" stroke="#b8b8b8" stroke-width="1"/>
<path d="M166.5,368 v8 M176.5,368 v8 M166.5,369 h10" fill="none" stroke="#222" stroke-width="1.3"/>
<path d="M167.5,382.5 l8,8 M166.5,384.5 l3,-3 M173.5,391.5 l3,-3" fill="none" stroke="#222" stroke-width="1.3"/>
<path d="M167.5,406 Q167.5,397 176.5,397" fill="none" stroke="#222" stroke-width="1.2"/>
<path d="M169.5,402 l3,-3" fill="none" stroke="#345" stroke-width="1"/>
<path d="M167.5,410.5 v10 h9" fill="none" stroke="#222" stroke-width="1.1"/>
<path d="M170.5,417.5 l5,-5" fill="none" stroke="#345" stroke-width="1.3"/>
<circle cx="171.5" cy="433" r="5" fill="none" stroke="#222" stroke-width="1.1"/>
<path d="M168.5,430 l6,6" fill="none" stroke="#222" stroke-width="1.2"/>
<path d="M168.5,453 l3,-4 l-2,-1 l5,-5" fill="none" stroke="#222" stroke-width="1.2"/>
<circle cx="171.5" cy="463" r="5" fill="none" stroke="#222" stroke-width="1.1"/>
<path d="M167.5,467 l8,-8" fill="none" stroke="#222" stroke-width="1.2"/>
<path d="M166.5,481.5 h10 M166.5,481.5 l5,-8 q4,2 5,8" fill="none" stroke="#222" stroke-width="1.1"/>
<rect x="166.5" y="491" width="10" height="10" fill="#ccd080" stroke="#454" stroke-width="0.8"/>
<path d="M167.5,500 l8,-8" fill="none" stroke="#222" stroke-width="1.3"/>
<path d="M166.5,507 h10 M167.5,507 v9 M175.5,507 v9 M166.5,512 h10" fill="none" stroke="#222" stroke-width="1.1"/>
<path d="M166.5,522.5 h10 M166.5,520.5 v10 M171.5,520.5 v10 M176.5,520.5 v10 M166.5,527.5 h10" fill="none" stroke="#222" stroke-width="1"/>
<path d="M166.5,548 l6,-5 h4" fill="none" stroke="#463" stroke-width="1.5"/>
<rect x="172.5" y="539" width="4" height="4" fill="#dc4"/>
<rect x="166.5" y="555" width="10" height="8" fill="#9bd" stroke="#246" stroke-width="1"/>
<line x1="171.5" y1="555" x2="171.5" y2="563" stroke="#246" stroke-width="0.8"/>
<circle cx="171.5" cy="574" r="5" fill="none" stroke="#222" stroke-width="1.1"/>
<path d="M169.5,574 h4 M171.5,572 v4" fill="none" stroke="#222" stroke-width="1.2"/>
<text x="171.5" y="591" font-family="Liberation Sans" font-size="9" fill="#222" text-anchor="middle">A</text>
<path d="M166.5,594 h10 M166.5,591 v6 M176.5,591 v6" fill="none" stroke="#222" stroke-width="1"/>
<line x1="164" y1="424.5" x2="179" y2="424.5" stroke="#c8c8c8" stroke-width="1"/>
<line x1="164" y1="487" x2="179" y2="487" stroke="#c8c8c8" stroke-width="1"/>
<line x1="164" y1="535" x2="179" y2="535" stroke="#c8c8c8" stroke-width="1"/>
<line x1="164" y1="566" x2="179" y2="566" stroke="#c8c8c8" stroke-width="1"/>
<path d="M1266.5,86 l8,-9 l2,2 l-8,9z" fill="#d8d070" stroke="#665" stroke-width="0.8"/>
<path d="M1265.5,86 h10" fill="none" stroke="#444" stroke-width="1"/>
<circle cx="1269.5" cy="94" r="3" fill="none" stroke="#333" stroke-width="1.1"/><circle cx="1273.5" cy="98" r="3" fill="none" stroke="#333" stroke-width="1.1"/>
<path d="M1270.5,106 v10 h-5z M1272.5,106 v10 h5z" fill="none" stroke="#333" stroke-width="1"/>
<path d="M1266.5,130 v-3 q5,-8 10,0 v3z" fill="#cde" stroke="#246" stroke-width="1.1"/>
<rect x="1266.5" y="135" width="4" height="4" fill="none" stroke="#333" stroke-width="1"/>
<rect x="1266.5" y="141" width="4" height="4" fill="none" stroke="#333" stroke-width="1"/>
<rect x="1272.5" y="135" width="4" height="4" fill="none" stroke="#333" stroke-width="1"/>
<rect x="1272.5" y="141" width="4" height="4" fill="none" stroke="#333" stroke-width="1"/>
<path d="M1266.5,154.5 h10 M1271.5,149.5 v10" fill="none" stroke="#246" stroke-width="1.3"/>
<path d="M1266.5,154.5 l2,-2 v4z M1276.5,154.5 l-2,-2 v4z M1271.5,149.5 l-2,2 h4z M1271.5,159.5 l-2,-2 h4z" fill="#246" stroke="#246" stroke-width="0.6"/>
<path d="M1275.5,167 A5,5 0 1,1 1271.5,164" fill="none" stroke="#246" stroke-width="1.3"/>
<path d="M1271.5,162 l3,2 l-3,2z" fill="#246" stroke="none" stroke-width="1"/>
<rect x="1266.5" y="179" width="10" height="10" fill="none" stroke="#777" stroke-width="1"/>
<rect x="1266.5" y="184" width="5" height="5" fill="none" stroke="#777" stroke-width="1"/>
<path d="M1266.5,203 v-10 h3 l7,10z" fill="none" stroke="#777" stroke-width="1"/>
<path d="M1266.5,215 l10,-6 M1269.5,208 l4,8" fill="none" stroke="#777" stroke-width="1"/>
<path d="M1266.5,230 h5 l5,-6 M1276.5,222 v10" fill="none" stroke="#777" stroke-width="1"/>
<rect x="1266.5" y="238" width="10" height="8" fill="none" stroke="#333" stroke-width="1"/>
<path d="M1266.5,252 v8 h10 v-8" fill="none" stroke="#333" stroke-width="1"/>
<path d="M1266.5,271 h10 M1269.5,268 l2,3 l-2,3 M1273.5,268 l-2,3 l2,3" fill="none" stroke="#222" stroke-width="1"/>
<path d="M1267.5,291 v-6 l4,-4 h5" fill="none" stroke="#246" stroke-width="1.1"/>
<path d="M1267.5,305 v-4 q0,-5 5,-5 h4" fill="none" stroke="#246" stroke-width="1.1"/>
<path d="M1267.5,320 l8,-8 M1267.5,312 l8,8" fill="none" stroke="#c84" stroke-width="1.4"/>
<path d="M1074.5,623.5 H1254 Q1262.5,623.5 1262.5,632 V665 Q1262.5,673.5 1254,673.5 H1217 L1217.5,687 L1204,673.5 H1074.5 Q1066.5,673.5 1066.5,665 V632 Q1066.5,623.5 1074.5,623.5Z" fill="#ffffe6" stroke="#1a1a1a" stroke-width="1"/>
<circle cx="1078" cy="634.5" r="4.6" fill="#2a4aa8"/>
<text x="1078" y="637.5" font-family="Liberation Sans" font-size="7" fill="#fff" font-weight="bold" text-anchor="middle">i</text>
<text x="1090" y="637.5" font-family="Liberation Sans" font-size="9.5" fill="#111" font-weight="bold" textLength="84" lengthAdjust="spacingAndGlyphs">Communication Center</text>
<rect x="1246.5" y="629.5" width="10" height="10" fill="#fafafa" stroke="#666" stroke-width="0.8"/>
<path d="M1249,632 l5,5 M1254,632 l-5,5" fill="none" stroke="#000" stroke-width="1.5"/>
<text x="1077" y="651" font-family="Liberation Sans" font-size="9" fill="#222" textLength="176" lengthAdjust="spacingAndGlyphs">The easy way to keep you and your software up-to-date.</text>
<text x="1077" y="664" font-family="Liberation Sans" font-size="9" fill="#2a2a9a" textLength="33" lengthAdjust="spacingAndGlyphs">Click here.</text>
<line x1="1077" y1="665.5" x2="1110" y2="665.5" stroke="#2a2a9a" stroke-width="0.8"/>
</svg>
</body></html>
